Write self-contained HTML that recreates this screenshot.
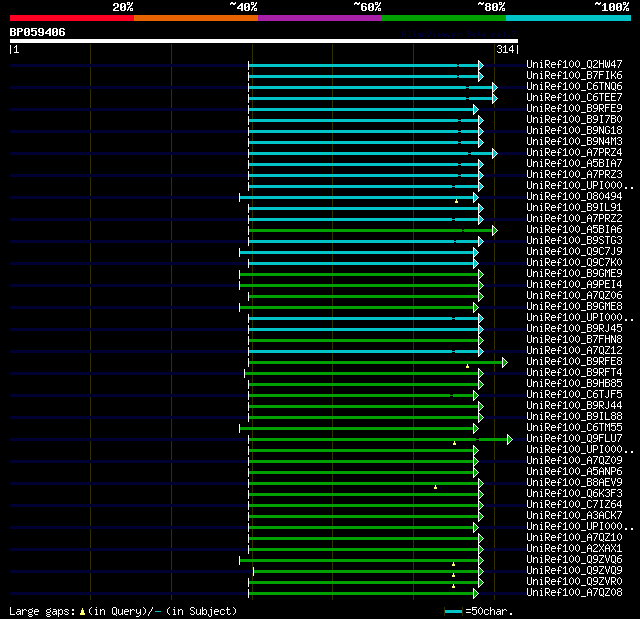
<!DOCTYPE html>
<html lang="en"><head><meta charset="utf-8"><title>AlignView - BP059406</title>
<style>
html,body{margin:0;padding:0;background:#000;}
body{width:640px;height:619px;overflow:hidden;position:relative;font-family:"Liberation Mono",monospace;}
#chart{position:absolute;left:0;top:0;width:640px;height:619px;display:block;}
#labels span{position:absolute;white-space:pre;color:transparent;line-height:13px;height:13px;overflow:hidden;}
#labels .s{font-size:10px;}
#labels .m{font-size:11.6px;font-weight:bold;}
#labels .t{font-size:8.3px;}
</style></head><body>
<svg id="chart" width="640" height="619" viewBox="0 0 640 619" shape-rendering="crispEdges">
<defs><path id="M50" d="M1 3h4v1h-4zM0 4h2v1h-2zM4 4h2v1h-2zM0 5h2v1h-2zM4 5h2v1h-2zM4 6h2v1h-2zM2 7h3v1h-3zM1 8h2v1h-2zM0 9h2v1h-2zM0 10h6v1h-6z"/><path id="M48" d="M1 3h4v1h-4zM0 4h2v1h-2zM4 4h2v1h-2zM0 5h2v1h-2zM4 5h2v1h-2zM0 6h2v1h-2zM3 6h3v1h-3zM0 7h3v1h-3zM4 7h2v1h-2zM0 8h2v1h-2zM4 8h2v1h-2zM0 9h2v1h-2zM4 9h2v1h-2zM1 10h4v1h-4z"/><path id="M37" d="M0 2h3v1h-3zM5 2h1v1h-1zM0 3h1v1h-1zM2 3h1v1h-1zM4 3h2v1h-2zM0 4h3v1h-3zM4 4h1v1h-1zM3 5h2v1h-2zM2 6h2v1h-2zM1 7h2v1h-2zM1 8h1v1h-1zM3 8h3v1h-3zM0 9h2v1h-2zM3 9h1v1h-1zM5 9h1v1h-1zM0 10h1v1h-1zM3 10h3v1h-3z"/><path id="M126" d="M1 2h2v1h-2zM5 2h1v1h-1zM0 3h6v1h-6zM0 4h1v1h-1zM3 4h2v1h-2z"/><path id="M52" d="M4 3h2v1h-2zM3 4h3v1h-3zM2 5h4v1h-4zM1 6h2v1h-2zM4 6h2v1h-2zM0 7h2v1h-2zM4 7h2v1h-2zM0 8h6v1h-6zM4 9h2v1h-2zM4 10h2v1h-2z"/><path id="M54" d="M1 3h4v1h-4zM0 4h2v1h-2zM4 4h2v1h-2zM0 5h2v1h-2zM0 6h5v1h-5zM0 7h2v1h-2zM4 7h2v1h-2zM0 8h2v1h-2zM4 8h2v1h-2zM0 9h2v1h-2zM4 9h2v1h-2zM1 10h4v1h-4z"/><path id="M56" d="M1 3h4v1h-4zM0 4h2v1h-2zM4 4h2v1h-2zM0 5h2v1h-2zM4 5h2v1h-2zM1 6h4v1h-4zM0 7h2v1h-2zM4 7h2v1h-2zM0 8h2v1h-2zM4 8h2v1h-2zM0 9h2v1h-2zM4 9h2v1h-2zM1 10h4v1h-4z"/><path id="M49" d="M2 3h2v1h-2zM1 4h3v1h-3zM0 5h1v1h-1zM2 5h2v1h-2zM2 6h2v1h-2zM2 7h2v1h-2zM2 8h2v1h-2zM2 9h2v1h-2zM0 10h6v1h-6z"/><path id="M66" d="M0 3h5v1h-5zM0 4h2v1h-2zM4 4h2v1h-2zM0 5h2v1h-2zM4 5h2v1h-2zM0 6h5v1h-5zM0 7h2v1h-2zM4 7h2v1h-2zM0 8h2v1h-2zM4 8h2v1h-2zM0 9h2v1h-2zM4 9h2v1h-2zM0 10h5v1h-5z"/><path id="M80" d="M0 3h5v1h-5zM0 4h2v1h-2zM4 4h2v1h-2zM0 5h2v1h-2zM4 5h2v1h-2zM0 6h5v1h-5zM0 7h2v1h-2zM0 8h2v1h-2zM0 9h2v1h-2zM0 10h2v1h-2z"/><path id="M53" d="M0 3h6v1h-6zM0 4h2v1h-2zM0 5h5v1h-5zM0 6h2v1h-2zM4 6h2v1h-2zM4 7h2v1h-2zM4 8h2v1h-2zM0 9h2v1h-2zM4 9h2v1h-2zM1 10h4v1h-4z"/><path id="M57" d="M1 3h4v1h-4zM0 4h2v1h-2zM4 4h2v1h-2zM0 5h2v1h-2zM4 5h2v1h-2zM0 6h2v1h-2zM4 6h2v1h-2zM1 7h5v1h-5zM4 8h2v1h-2zM0 9h2v1h-2zM4 9h2v1h-2zM1 10h4v1h-4z"/><path id="T65" d="M1 1h2v1h-2zM0 2h1v1h-1zM3 2h1v1h-1zM0 3h1v1h-1zM3 3h1v1h-1zM0 4h4v1h-4zM0 5h1v1h-1zM3 5h1v1h-1zM0 6h1v1h-1zM3 6h1v1h-1z"/><path id="T108" d="M1 1h2v1h-2zM2 2h1v1h-1zM2 3h1v1h-1zM2 4h1v1h-1zM2 5h1v1h-1zM1 6h3v1h-3z"/><path id="T105" d="M2 1h1v1h-1zM1 3h2v1h-2zM2 4h1v1h-1zM2 5h1v1h-1zM1 6h3v1h-3z"/><path id="T103" d="M1 3h3v1h-3zM0 4h1v1h-1zM3 4h1v1h-1zM1 5h3v1h-3zM3 6h1v1h-1zM1 7h2v1h-2z"/><path id="T110" d="M0 3h1v1h-1zM2 3h1v1h-1zM0 4h2v1h-2zM3 4h1v1h-1zM0 5h1v1h-1zM3 5h1v1h-1zM0 6h1v1h-1zM3 6h1v1h-1z"/><path id="T86" d="M0 1h1v1h-1zM3 1h1v1h-1zM0 2h1v1h-1zM3 2h1v1h-1zM0 3h1v1h-1zM3 3h1v1h-1zM0 4h1v1h-1zM3 4h1v1h-1zM1 5h2v1h-2zM1 6h2v1h-2z"/><path id="T101" d="M1 3h2v1h-2zM0 4h1v1h-1zM2 4h2v1h-2zM0 5h2v1h-2zM1 6h3v1h-3z"/><path id="T119" d="M0 3h1v1h-1zM4 3h1v1h-1zM0 4h1v1h-1zM2 4h1v1h-1zM4 4h1v1h-1zM0 5h1v1h-1zM2 5h1v1h-1zM4 5h1v1h-1zM1 6h3v1h-3z"/><path id="T46" d="M1 5h2v1h-2zM1 6h2v1h-2z"/><path id="T112" d="M0 3h3v1h-3zM0 4h1v1h-1zM3 4h1v1h-1zM0 5h3v1h-3zM0 6h1v1h-1zM0 7h1v1h-1z"/><path id="T109" d="M0 3h2v1h-2zM3 3h1v1h-1zM0 4h1v1h-1zM2 4h1v1h-1zM4 4h1v1h-1zM0 5h1v1h-1zM2 5h1v1h-1zM4 5h1v1h-1zM0 6h1v1h-1zM4 6h1v1h-1z"/><path id="T66" d="M0 1h3v1h-3zM0 2h1v1h-1zM3 2h1v1h-1zM0 3h3v1h-3zM0 4h1v1h-1zM3 4h1v1h-1zM0 5h1v1h-1zM3 5h1v1h-1zM0 6h3v1h-3z"/><path id="T116" d="M1 1h1v1h-1zM1 2h1v1h-1zM0 3h3v1h-3zM1 4h1v1h-1zM1 5h1v1h-1zM3 5h1v1h-1zM2 6h1v1h-1z"/><path id="T97" d="M1 3h3v1h-3zM0 4h1v1h-1zM3 4h1v1h-1zM0 5h1v1h-1zM2 5h2v1h-2zM1 6h1v1h-1zM3 6h1v1h-1z"/><path id="T114" d="M0 3h1v1h-1zM2 3h1v1h-1zM0 4h2v1h-2zM3 4h1v1h-1zM0 5h1v1h-1zM0 6h1v1h-1z"/><path id="T55" d="M0 1h4v1h-4zM3 2h1v1h-1zM2 3h1v1h-1zM2 4h1v1h-1zM1 5h1v1h-1zM1 6h1v1h-1z"/><path id="S124" d="M2 3h1v1h-1zM2 4h1v1h-1zM2 5h1v1h-1zM2 6h1v1h-1zM2 7h1v1h-1zM2 8h1v1h-1zM2 9h1v1h-1zM2 10h1v1h-1zM2 11h1v1h-1z"/><path id="S49" d="M2 3h1v1h-1zM1 4h2v1h-2zM0 5h1v1h-1zM2 5h1v1h-1zM2 6h1v1h-1zM2 7h1v1h-1zM2 8h1v1h-1zM2 9h1v1h-1zM0 10h5v1h-5z"/><path id="S51" d="M1 3h3v1h-3zM0 4h1v1h-1zM4 4h1v1h-1zM4 5h1v1h-1zM2 6h2v1h-2zM4 7h1v1h-1zM4 8h1v1h-1zM0 9h1v1h-1zM4 9h1v1h-1zM1 10h3v1h-3z"/><path id="S52" d="M3 3h1v1h-1zM2 4h2v1h-2zM1 5h1v1h-1zM3 5h1v1h-1zM0 6h1v1h-1zM3 6h1v1h-1zM0 7h1v1h-1zM3 7h1v1h-1zM0 8h5v1h-5zM3 9h1v1h-1zM3 10h1v1h-1z"/><path id="S85" d="M0 3h1v1h-1zM4 3h1v1h-1zM0 4h1v1h-1zM4 4h1v1h-1zM0 5h1v1h-1zM4 5h1v1h-1zM0 6h1v1h-1zM4 6h1v1h-1zM0 7h1v1h-1zM4 7h1v1h-1zM0 8h1v1h-1zM4 8h1v1h-1zM0 9h1v1h-1zM4 9h1v1h-1zM1 10h3v1h-3z"/><path id="S110" d="M0 5h1v1h-1zM2 5h2v1h-2zM0 6h2v1h-2zM4 6h1v1h-1zM0 7h1v1h-1zM4 7h1v1h-1zM0 8h1v1h-1zM4 8h1v1h-1zM0 9h1v1h-1zM4 9h1v1h-1zM0 10h1v1h-1zM4 10h1v1h-1z"/><path id="S105" d="M2 3h1v1h-1zM1 5h2v1h-2zM2 6h1v1h-1zM2 7h1v1h-1zM2 8h1v1h-1zM2 9h1v1h-1zM1 10h3v1h-3z"/><path id="S82" d="M0 3h4v1h-4zM0 4h1v1h-1zM4 4h1v1h-1zM0 5h1v1h-1zM4 5h1v1h-1zM0 6h1v1h-1zM4 6h1v1h-1zM0 7h4v1h-4zM0 8h1v1h-1zM2 8h1v1h-1zM0 9h1v1h-1zM3 9h1v1h-1zM0 10h1v1h-1zM4 10h1v1h-1z"/><path id="S101" d="M1 5h3v1h-3zM0 6h1v1h-1zM4 6h1v1h-1zM0 7h5v1h-5zM0 8h1v1h-1zM0 9h1v1h-1zM1 10h3v1h-3z"/><path id="S102" d="M2 3h2v1h-2zM1 4h1v1h-1zM4 4h1v1h-1zM1 5h1v1h-1zM1 6h1v1h-1zM0 7h4v1h-4zM1 8h1v1h-1zM1 9h1v1h-1zM1 10h1v1h-1z"/><path id="S48" d="M2 3h1v1h-1zM1 4h1v1h-1zM3 4h1v1h-1zM0 5h1v1h-1zM4 5h1v1h-1zM0 6h1v1h-1zM4 6h1v1h-1zM0 7h1v1h-1zM4 7h1v1h-1zM0 8h1v1h-1zM4 8h1v1h-1zM1 9h1v1h-1zM3 9h1v1h-1zM2 10h1v1h-1z"/><path id="S95" d="M0 11h5v1h-5z"/><path id="S81" d="M1 3h3v1h-3zM0 4h1v1h-1zM4 4h1v1h-1zM0 5h1v1h-1zM4 5h1v1h-1zM0 6h1v1h-1zM4 6h1v1h-1zM0 7h1v1h-1zM4 7h1v1h-1zM0 8h1v1h-1zM4 8h1v1h-1zM0 9h1v1h-1zM2 9h1v1h-1zM4 9h1v1h-1zM1 10h3v1h-3zM4 11h1v1h-1z"/><path id="S50" d="M1 3h3v1h-3zM0 4h1v1h-1zM4 4h1v1h-1zM4 5h1v1h-1zM3 6h1v1h-1zM2 7h1v1h-1zM1 8h1v1h-1zM0 9h1v1h-1zM0 10h5v1h-5z"/><path id="S72" d="M0 3h1v1h-1zM4 3h1v1h-1zM0 4h1v1h-1zM4 4h1v1h-1zM0 5h1v1h-1zM4 5h1v1h-1zM0 6h5v1h-5zM0 7h1v1h-1zM4 7h1v1h-1zM0 8h1v1h-1zM4 8h1v1h-1zM0 9h1v1h-1zM4 9h1v1h-1zM0 10h1v1h-1zM4 10h1v1h-1z"/><path id="S87" d="M0 3h1v1h-1zM4 3h1v1h-1zM0 4h1v1h-1zM4 4h1v1h-1zM0 5h1v1h-1zM2 5h1v1h-1zM4 5h1v1h-1zM0 6h1v1h-1zM2 6h1v1h-1zM4 6h1v1h-1zM0 7h1v1h-1zM2 7h1v1h-1zM4 7h1v1h-1zM0 8h1v1h-1zM2 8h1v1h-1zM4 8h1v1h-1zM0 9h2v1h-2zM3 9h2v1h-2zM1 10h1v1h-1zM3 10h1v1h-1z"/><path id="S55" d="M0 3h5v1h-5zM4 4h1v1h-1zM3 5h1v1h-1zM3 6h1v1h-1zM2 7h1v1h-1zM2 8h1v1h-1zM1 9h1v1h-1zM1 10h1v1h-1z"/><path id="S66" d="M0 3h4v1h-4zM0 4h1v1h-1zM4 4h1v1h-1zM0 5h1v1h-1zM4 5h1v1h-1zM0 6h4v1h-4zM0 7h1v1h-1zM4 7h1v1h-1zM0 8h1v1h-1zM4 8h1v1h-1zM0 9h1v1h-1zM4 9h1v1h-1zM0 10h4v1h-4z"/><path id="S70" d="M0 3h5v1h-5zM0 4h1v1h-1zM0 5h1v1h-1zM0 6h4v1h-4zM0 7h1v1h-1zM0 8h1v1h-1zM0 9h1v1h-1zM0 10h1v1h-1z"/><path id="S73" d="M1 3h3v1h-3zM2 4h1v1h-1zM2 5h1v1h-1zM2 6h1v1h-1zM2 7h1v1h-1zM2 8h1v1h-1zM2 9h1v1h-1zM1 10h3v1h-3z"/><path id="S75" d="M0 3h1v1h-1zM4 3h1v1h-1zM0 4h1v1h-1zM4 4h1v1h-1zM0 5h1v1h-1zM3 5h1v1h-1zM0 6h1v1h-1zM2 6h1v1h-1zM0 7h3v1h-3zM0 8h1v1h-1zM3 8h1v1h-1zM0 9h1v1h-1zM4 9h1v1h-1zM0 10h1v1h-1zM4 10h1v1h-1z"/><path id="S54" d="M2 3h3v1h-3zM1 4h1v1h-1zM0 5h1v1h-1zM0 6h4v1h-4zM0 7h1v1h-1zM4 7h1v1h-1zM0 8h1v1h-1zM4 8h1v1h-1zM0 9h1v1h-1zM4 9h1v1h-1zM1 10h3v1h-3z"/><path id="S67" d="M1 3h3v1h-3zM0 4h1v1h-1zM4 4h1v1h-1zM0 5h1v1h-1zM0 6h1v1h-1zM0 7h1v1h-1zM0 8h1v1h-1zM0 9h1v1h-1zM4 9h1v1h-1zM1 10h3v1h-3z"/><path id="S84" d="M0 3h5v1h-5zM2 4h1v1h-1zM2 5h1v1h-1zM2 6h1v1h-1zM2 7h1v1h-1zM2 8h1v1h-1zM2 9h1v1h-1zM2 10h1v1h-1z"/><path id="S78" d="M0 3h1v1h-1zM4 3h1v1h-1zM0 4h2v1h-2zM4 4h1v1h-1zM0 5h2v1h-2zM4 5h1v1h-1zM0 6h1v1h-1zM2 6h1v1h-1zM4 6h1v1h-1zM0 7h1v1h-1zM2 7h1v1h-1zM4 7h1v1h-1zM0 8h1v1h-1zM3 8h2v1h-2zM0 9h1v1h-1zM3 9h2v1h-2zM0 10h1v1h-1zM4 10h1v1h-1z"/><path id="S69" d="M0 3h5v1h-5zM0 4h1v1h-1zM0 5h1v1h-1zM0 6h4v1h-4zM0 7h1v1h-1zM0 8h1v1h-1zM0 9h1v1h-1zM0 10h5v1h-5z"/><path id="S57" d="M1 3h3v1h-3zM0 4h1v1h-1zM4 4h1v1h-1zM0 5h1v1h-1zM4 5h1v1h-1zM0 6h1v1h-1zM4 6h1v1h-1zM1 7h4v1h-4zM4 8h1v1h-1zM3 9h1v1h-1zM0 10h3v1h-3z"/><path id="S71" d="M1 3h3v1h-3zM0 4h1v1h-1zM4 4h1v1h-1zM0 5h1v1h-1zM0 6h1v1h-1zM0 7h1v1h-1zM3 7h2v1h-2zM0 8h1v1h-1zM4 8h1v1h-1zM0 9h1v1h-1zM4 9h1v1h-1zM1 10h3v1h-3z"/><path id="S56" d="M1 3h3v1h-3zM0 4h1v1h-1zM4 4h1v1h-1zM0 5h1v1h-1zM4 5h1v1h-1zM1 6h3v1h-3zM0 7h1v1h-1zM4 7h1v1h-1zM0 8h1v1h-1zM4 8h1v1h-1zM0 9h1v1h-1zM4 9h1v1h-1zM1 10h3v1h-3z"/><path id="S77" d="M0 3h1v1h-1zM4 3h1v1h-1zM0 4h2v1h-2zM3 4h2v1h-2zM0 5h1v1h-1zM2 5h1v1h-1zM4 5h1v1h-1zM0 6h1v1h-1zM2 6h1v1h-1zM4 6h1v1h-1zM0 7h1v1h-1zM4 7h1v1h-1zM0 8h1v1h-1zM4 8h1v1h-1zM0 9h1v1h-1zM4 9h1v1h-1zM0 10h1v1h-1zM4 10h1v1h-1z"/><path id="S65" d="M2 3h1v1h-1zM1 4h1v1h-1zM3 4h1v1h-1zM0 5h1v1h-1zM4 5h1v1h-1zM0 6h1v1h-1zM4 6h1v1h-1zM0 7h5v1h-5zM0 8h1v1h-1zM4 8h1v1h-1zM0 9h1v1h-1zM4 9h1v1h-1zM0 10h1v1h-1zM4 10h1v1h-1z"/><path id="S80" d="M0 3h4v1h-4zM0 4h1v1h-1zM4 4h1v1h-1zM0 5h1v1h-1zM4 5h1v1h-1zM0 6h1v1h-1zM4 6h1v1h-1zM0 7h4v1h-4zM0 8h1v1h-1zM0 9h1v1h-1zM0 10h1v1h-1z"/><path id="S90" d="M0 3h5v1h-5zM4 4h1v1h-1zM3 5h1v1h-1zM2 6h1v1h-1zM2 7h1v1h-1zM1 8h1v1h-1zM0 9h1v1h-1zM0 10h5v1h-5z"/><path id="S53" d="M0 3h5v1h-5zM0 4h1v1h-1zM0 5h4v1h-4zM0 6h1v1h-1zM4 6h1v1h-1zM4 7h1v1h-1zM4 8h1v1h-1zM0 9h1v1h-1zM4 9h1v1h-1zM1 10h3v1h-3z"/><path id="S46" d="M2 9h2v1h-2zM2 10h2v1h-2z"/><path id="S79" d="M1 3h3v1h-3zM0 4h1v1h-1zM4 4h1v1h-1zM0 5h1v1h-1zM4 5h1v1h-1zM0 6h1v1h-1zM4 6h1v1h-1zM0 7h1v1h-1zM4 7h1v1h-1zM0 8h1v1h-1zM4 8h1v1h-1zM0 9h1v1h-1zM4 9h1v1h-1zM1 10h3v1h-3z"/><path id="S76" d="M0 3h1v1h-1zM0 4h1v1h-1zM0 5h1v1h-1zM0 6h1v1h-1zM0 7h1v1h-1zM0 8h1v1h-1zM0 9h1v1h-1zM0 10h5v1h-5z"/><path id="S83" d="M1 3h3v1h-3zM0 4h1v1h-1zM4 4h1v1h-1zM0 5h1v1h-1zM1 6h2v1h-2zM3 7h1v1h-1zM4 8h1v1h-1zM0 9h1v1h-1zM4 9h1v1h-1zM1 10h3v1h-3z"/><path id="S74" d="M3 3h1v1h-1zM3 4h1v1h-1zM3 5h1v1h-1zM3 6h1v1h-1zM3 7h1v1h-1zM3 8h1v1h-1zM0 9h1v1h-1zM3 9h1v1h-1zM1 10h2v1h-2z"/><path id="S86" d="M0 3h1v1h-1zM4 3h1v1h-1zM0 4h1v1h-1zM4 4h1v1h-1zM0 5h1v1h-1zM4 5h1v1h-1zM1 6h1v1h-1zM3 6h1v1h-1zM1 7h1v1h-1zM3 7h1v1h-1zM1 8h1v1h-1zM3 8h1v1h-1zM2 9h1v1h-1zM2 10h1v1h-1z"/><path id="S88" d="M0 3h1v1h-1zM4 3h1v1h-1zM0 4h1v1h-1zM4 4h1v1h-1zM1 5h1v1h-1zM3 5h1v1h-1zM2 6h1v1h-1zM2 7h1v1h-1zM1 8h1v1h-1zM3 8h1v1h-1zM0 9h1v1h-1zM4 9h1v1h-1zM0 10h1v1h-1zM4 10h1v1h-1z"/><path id="S97" d="M1 5h3v1h-3zM4 6h1v1h-1zM1 7h4v1h-4zM0 8h1v1h-1zM4 8h1v1h-1zM0 9h1v1h-1zM3 9h2v1h-2zM1 10h2v1h-2zM4 10h1v1h-1z"/><path id="S114" d="M0 5h1v1h-1zM2 5h2v1h-2zM0 6h2v1h-2zM4 6h1v1h-1zM0 7h1v1h-1zM0 8h1v1h-1zM0 9h1v1h-1zM0 10h1v1h-1z"/><path id="S103" d="M4 4h1v1h-1zM1 5h3v1h-3zM0 6h1v1h-1zM4 6h1v1h-1zM0 7h1v1h-1zM4 7h1v1h-1zM1 8h3v1h-3zM0 9h1v1h-1zM1 10h3v1h-3zM0 11h1v1h-1zM4 11h1v1h-1zM1 12h3v1h-3z"/><path id="S112" d="M0 5h1v1h-1zM2 5h2v1h-2zM0 6h2v1h-2zM4 6h1v1h-1zM0 7h1v1h-1zM4 7h1v1h-1zM0 8h1v1h-1zM4 8h1v1h-1zM0 9h2v1h-2zM4 9h1v1h-1zM0 10h1v1h-1zM2 10h2v1h-2zM0 11h1v1h-1zM0 12h1v1h-1z"/><path id="S115" d="M1 5h3v1h-3zM0 6h1v1h-1zM4 6h1v1h-1zM1 7h2v1h-2zM3 8h1v1h-1zM0 9h1v1h-1zM4 9h1v1h-1zM1 10h3v1h-3z"/><path id="S58" d="M2 5h2v1h-2zM2 6h2v1h-2zM2 9h2v1h-2zM2 10h2v1h-2z"/><path id="S40" d="M3 3h1v1h-1zM2 4h1v1h-1zM1 5h1v1h-1zM1 6h1v1h-1zM1 7h1v1h-1zM1 8h1v1h-1zM2 9h1v1h-1zM3 10h1v1h-1z"/><path id="S117" d="M0 5h1v1h-1zM4 5h1v1h-1zM0 6h1v1h-1zM4 6h1v1h-1zM0 7h1v1h-1zM4 7h1v1h-1zM0 8h1v1h-1zM4 8h1v1h-1zM0 9h1v1h-1zM3 9h2v1h-2zM1 10h2v1h-2zM4 10h1v1h-1z"/><path id="S121" d="M0 5h1v1h-1zM4 5h1v1h-1zM0 6h1v1h-1zM4 6h1v1h-1zM0 7h1v1h-1zM4 7h1v1h-1zM0 8h1v1h-1zM3 8h2v1h-2zM1 9h2v1h-2zM4 9h1v1h-1zM4 10h1v1h-1zM3 11h1v1h-1zM0 12h3v1h-3z"/><path id="S41" d="M1 3h1v1h-1zM2 4h1v1h-1zM3 5h1v1h-1zM3 6h1v1h-1zM3 7h1v1h-1zM3 8h1v1h-1zM2 9h1v1h-1zM1 10h1v1h-1z"/><path id="S47" d="M4 3h1v1h-1zM4 4h1v1h-1zM3 5h1v1h-1zM3 6h1v1h-1zM2 7h1v1h-1zM1 8h1v1h-1zM1 9h1v1h-1zM0 10h1v1h-1zM0 11h1v1h-1z"/><path id="S98" d="M0 3h1v1h-1zM0 4h1v1h-1zM0 5h1v1h-1zM2 5h2v1h-2zM0 6h2v1h-2zM4 6h1v1h-1zM0 7h1v1h-1zM4 7h1v1h-1zM0 8h1v1h-1zM4 8h1v1h-1zM0 9h2v1h-2zM4 9h1v1h-1zM0 10h1v1h-1zM2 10h2v1h-2z"/><path id="S106" d="M3 3h1v1h-1zM2 5h2v1h-2zM3 6h1v1h-1zM3 7h1v1h-1zM3 8h1v1h-1zM3 9h1v1h-1zM0 10h1v1h-1zM3 10h1v1h-1zM0 11h1v1h-1zM3 11h1v1h-1zM1 12h2v1h-2z"/><path id="S99" d="M1 5h3v1h-3zM0 6h1v1h-1zM4 6h1v1h-1zM0 7h1v1h-1zM0 8h1v1h-1zM0 9h1v1h-1zM4 9h1v1h-1zM1 10h3v1h-3z"/><path id="S116" d="M1 3h1v1h-1zM1 4h1v1h-1zM0 5h4v1h-4zM1 6h1v1h-1zM1 7h1v1h-1zM1 8h1v1h-1zM1 9h1v1h-1zM4 9h1v1h-1zM2 10h2v1h-2z"/><path id="S61" d="M0 5h5v1h-5zM0 8h5v1h-5z"/><path id="S104" d="M0 3h1v1h-1zM0 4h1v1h-1zM0 5h1v1h-1zM2 5h2v1h-2zM0 6h2v1h-2zM4 6h1v1h-1zM0 7h1v1h-1zM4 7h1v1h-1zM0 8h1v1h-1zM4 8h1v1h-1zM0 9h1v1h-1zM4 9h1v1h-1zM0 10h1v1h-1zM4 10h1v1h-1z"/></defs>
<rect width="640" height="619" fill="#000"/>
<rect x="10" y="15" width="124" height="6" fill="#ff0024"/>
<rect x="134" y="15" width="124" height="6" fill="#e86400"/>
<rect x="258" y="15" width="124" height="6" fill="#a820a8"/>
<rect x="382" y="15" width="124" height="6" fill="#00a000"/>
<rect x="506" y="15" width="125" height="6" fill="#00c4c8"/>
<g fill="#fff" transform="translate(0,0)"><use href="#M50" x="113"/><use href="#M48" x="120"/><use href="#M37" x="127"/></g>
<g fill="#fff" transform="translate(0,0)"><use href="#M126" x="230"/><use href="#M52" x="237"/><use href="#M48" x="244"/><use href="#M37" x="251"/></g>
<g fill="#fff" transform="translate(0,0)"><use href="#M126" x="354"/><use href="#M54" x="361"/><use href="#M48" x="368"/><use href="#M37" x="375"/></g>
<g fill="#fff" transform="translate(0,0)"><use href="#M126" x="478"/><use href="#M56" x="485"/><use href="#M48" x="492"/><use href="#M37" x="499"/></g>
<g fill="#fff" transform="translate(0,0)"><use href="#M126" x="595"/><use href="#M49" x="602"/><use href="#M48" x="609"/><use href="#M48" x="616"/><use href="#M37" x="623"/></g>
<g fill="#fff" transform="translate(0,25)"><use href="#M66" x="10"/><use href="#M80" x="17"/><use href="#M48" x="24"/><use href="#M53" x="31"/><use href="#M57" x="38"/><use href="#M52" x="45"/><use href="#M48" x="52"/><use href="#M54" x="59"/></g>
<g fill="#000036" transform="translate(0,30)"><use href="#T65" x="402"/><use href="#T108" x="407"/><use href="#T105" x="412"/><use href="#T103" x="417"/><use href="#T110" x="422"/><use href="#T86" x="427"/><use href="#T105" x="432"/><use href="#T101" x="437"/><use href="#T119" x="442"/><use href="#T46" x="447"/><use href="#T112" x="452"/><use href="#T109" x="457"/><use href="#T66" x="467"/><use href="#T101" x="472"/><use href="#T116" x="477"/><use href="#T97" x="482"/><use href="#T114" x="492"/><use href="#T101" x="497"/><use href="#T108" x="502"/><use href="#T46" x="507"/><use href="#T55" x="512"/></g>
<rect x="90" y="44" width="1" height="556" fill="#323000"/>
<rect x="171" y="44" width="1" height="556" fill="#323000"/>
<rect x="252" y="44" width="1" height="556" fill="#323000"/>
<rect x="332" y="44" width="1" height="556" fill="#323000"/>
<rect x="413" y="44" width="1" height="556" fill="#323000"/>
<rect x="494" y="44" width="1" height="556" fill="#323000"/>
<rect x="10" y="39" width="508" height="4" fill="#fff"/>
<g fill="#fff" transform="translate(0,42)"><use href="#S124" x="8"/><use href="#S49" x="14"/></g>
<g fill="#fff" transform="translate(0,42)"><use href="#S51" x="497"/><use href="#S49" x="503"/><use href="#S52" x="509"/><use href="#S124" x="515"/></g>
<rect x="10" y="64" width="517" height="3" fill="#000032"/>
<rect x="249" y="64" width="229" height="3" fill="#00c4c8"/>
<rect x="457" y="64" width="2" height="1" fill="#000"/>
<rect x="457" y="66" width="2" height="1" fill="#000"/>
<rect x="248" y="61" width="1" height="9" fill="#fff"/>
<rect x="479" y="62" width="1" height="7" fill="#00c4c8"/>
<rect x="480" y="63" width="1" height="5" fill="#00c4c8"/>
<rect x="481" y="64" width="1" height="3" fill="#00c4c8"/>
<rect x="482" y="65" width="1" height="1" fill="#00c4c8"/>
<rect x="478" y="60" width="1" height="11" fill="#fff"/>
<rect x="479" y="61" width="1" height="1" fill="#fff"/>
<rect x="479" y="69" width="1" height="1" fill="#fff"/>
<rect x="480" y="62" width="1" height="1" fill="#fff"/>
<rect x="480" y="68" width="1" height="1" fill="#fff"/>
<rect x="481" y="63" width="1" height="1" fill="#fff"/>
<rect x="481" y="67" width="1" height="1" fill="#fff"/>
<rect x="482" y="64" width="1" height="1" fill="#fff"/>
<rect x="482" y="66" width="1" height="1" fill="#fff"/>
<rect x="483" y="65" width="1" height="1" fill="#fff"/>
<g fill="#fff" transform="translate(0,57)"><use href="#S85" x="527"/><use href="#S110" x="533"/><use href="#S105" x="539"/><use href="#S82" x="545"/><use href="#S101" x="551"/><use href="#S102" x="557"/><use href="#S49" x="563"/><use href="#S48" x="569"/><use href="#S48" x="575"/><use href="#S95" x="581"/><use href="#S81" x="587"/><use href="#S50" x="593"/><use href="#S72" x="599"/><use href="#S87" x="605"/><use href="#S52" x="611"/><use href="#S55" x="617"/></g>
<rect x="249" y="75" width="229" height="3" fill="#00c4c8"/>
<rect x="457" y="75" width="2" height="1" fill="#000"/>
<rect x="457" y="77" width="2" height="1" fill="#000"/>
<rect x="248" y="72" width="1" height="9" fill="#fff"/>
<rect x="479" y="73" width="1" height="7" fill="#00c4c8"/>
<rect x="480" y="74" width="1" height="5" fill="#00c4c8"/>
<rect x="481" y="75" width="1" height="3" fill="#00c4c8"/>
<rect x="482" y="76" width="1" height="1" fill="#00c4c8"/>
<rect x="478" y="71" width="1" height="11" fill="#fff"/>
<rect x="479" y="72" width="1" height="1" fill="#fff"/>
<rect x="479" y="80" width="1" height="1" fill="#fff"/>
<rect x="480" y="73" width="1" height="1" fill="#fff"/>
<rect x="480" y="79" width="1" height="1" fill="#fff"/>
<rect x="481" y="74" width="1" height="1" fill="#fff"/>
<rect x="481" y="78" width="1" height="1" fill="#fff"/>
<rect x="482" y="75" width="1" height="1" fill="#fff"/>
<rect x="482" y="77" width="1" height="1" fill="#fff"/>
<rect x="483" y="76" width="1" height="1" fill="#fff"/>
<g fill="#fff" transform="translate(0,68)"><use href="#S85" x="527"/><use href="#S110" x="533"/><use href="#S105" x="539"/><use href="#S82" x="545"/><use href="#S101" x="551"/><use href="#S102" x="557"/><use href="#S49" x="563"/><use href="#S48" x="569"/><use href="#S48" x="575"/><use href="#S95" x="581"/><use href="#S66" x="587"/><use href="#S55" x="593"/><use href="#S70" x="599"/><use href="#S73" x="605"/><use href="#S75" x="611"/><use href="#S54" x="617"/></g>
<rect x="10" y="86" width="517" height="3" fill="#000032"/>
<rect x="249" y="86" width="243" height="3" fill="#00c4c8"/>
<rect x="466" y="86" width="3" height="1" fill="#000"/>
<rect x="466" y="88" width="3" height="1" fill="#000"/>
<rect x="248" y="83" width="1" height="9" fill="#fff"/>
<rect x="493" y="84" width="1" height="7" fill="#00c4c8"/>
<rect x="494" y="85" width="1" height="5" fill="#00c4c8"/>
<rect x="495" y="86" width="1" height="3" fill="#00c4c8"/>
<rect x="496" y="87" width="1" height="1" fill="#00c4c8"/>
<rect x="492" y="82" width="1" height="11" fill="#fff"/>
<rect x="493" y="83" width="1" height="1" fill="#fff"/>
<rect x="493" y="91" width="1" height="1" fill="#fff"/>
<rect x="494" y="84" width="1" height="1" fill="#fff"/>
<rect x="494" y="90" width="1" height="1" fill="#fff"/>
<rect x="495" y="85" width="1" height="1" fill="#fff"/>
<rect x="495" y="89" width="1" height="1" fill="#fff"/>
<rect x="496" y="86" width="1" height="1" fill="#fff"/>
<rect x="496" y="88" width="1" height="1" fill="#fff"/>
<rect x="497" y="87" width="1" height="1" fill="#fff"/>
<g fill="#fff" transform="translate(0,79)"><use href="#S85" x="527"/><use href="#S110" x="533"/><use href="#S105" x="539"/><use href="#S82" x="545"/><use href="#S101" x="551"/><use href="#S102" x="557"/><use href="#S49" x="563"/><use href="#S48" x="569"/><use href="#S48" x="575"/><use href="#S95" x="581"/><use href="#S67" x="587"/><use href="#S54" x="593"/><use href="#S84" x="599"/><use href="#S78" x="605"/><use href="#S81" x="611"/><use href="#S54" x="617"/></g>
<rect x="249" y="97" width="243" height="3" fill="#00c4c8"/>
<rect x="466" y="97" width="3" height="1" fill="#000"/>
<rect x="466" y="99" width="3" height="1" fill="#000"/>
<rect x="248" y="94" width="1" height="9" fill="#fff"/>
<rect x="493" y="95" width="1" height="7" fill="#00c4c8"/>
<rect x="494" y="96" width="1" height="5" fill="#00c4c8"/>
<rect x="495" y="97" width="1" height="3" fill="#00c4c8"/>
<rect x="496" y="98" width="1" height="1" fill="#00c4c8"/>
<rect x="492" y="93" width="1" height="11" fill="#fff"/>
<rect x="493" y="94" width="1" height="1" fill="#fff"/>
<rect x="493" y="102" width="1" height="1" fill="#fff"/>
<rect x="494" y="95" width="1" height="1" fill="#fff"/>
<rect x="494" y="101" width="1" height="1" fill="#fff"/>
<rect x="495" y="96" width="1" height="1" fill="#fff"/>
<rect x="495" y="100" width="1" height="1" fill="#fff"/>
<rect x="496" y="97" width="1" height="1" fill="#fff"/>
<rect x="496" y="99" width="1" height="1" fill="#fff"/>
<rect x="497" y="98" width="1" height="1" fill="#fff"/>
<g fill="#fff" transform="translate(0,90)"><use href="#S85" x="527"/><use href="#S110" x="533"/><use href="#S105" x="539"/><use href="#S82" x="545"/><use href="#S101" x="551"/><use href="#S102" x="557"/><use href="#S49" x="563"/><use href="#S48" x="569"/><use href="#S48" x="575"/><use href="#S95" x="581"/><use href="#S67" x="587"/><use href="#S54" x="593"/><use href="#S84" x="599"/><use href="#S69" x="605"/><use href="#S69" x="611"/><use href="#S55" x="617"/></g>
<rect x="10" y="108" width="517" height="3" fill="#000032"/>
<rect x="249" y="108" width="224" height="3" fill="#00c4c8"/>
<rect x="248" y="105" width="1" height="9" fill="#fff"/>
<rect x="474" y="106" width="1" height="7" fill="#00c4c8"/>
<rect x="475" y="107" width="1" height="5" fill="#00c4c8"/>
<rect x="476" y="108" width="1" height="3" fill="#00c4c8"/>
<rect x="477" y="109" width="1" height="1" fill="#00c4c8"/>
<rect x="473" y="104" width="1" height="11" fill="#fff"/>
<rect x="474" y="105" width="1" height="1" fill="#fff"/>
<rect x="474" y="113" width="1" height="1" fill="#fff"/>
<rect x="475" y="106" width="1" height="1" fill="#fff"/>
<rect x="475" y="112" width="1" height="1" fill="#fff"/>
<rect x="476" y="107" width="1" height="1" fill="#fff"/>
<rect x="476" y="111" width="1" height="1" fill="#fff"/>
<rect x="477" y="108" width="1" height="1" fill="#fff"/>
<rect x="477" y="110" width="1" height="1" fill="#fff"/>
<rect x="478" y="109" width="1" height="1" fill="#fff"/>
<g fill="#fff" transform="translate(0,101)"><use href="#S85" x="527"/><use href="#S110" x="533"/><use href="#S105" x="539"/><use href="#S82" x="545"/><use href="#S101" x="551"/><use href="#S102" x="557"/><use href="#S49" x="563"/><use href="#S48" x="569"/><use href="#S48" x="575"/><use href="#S95" x="581"/><use href="#S66" x="587"/><use href="#S57" x="593"/><use href="#S82" x="599"/><use href="#S70" x="605"/><use href="#S69" x="611"/><use href="#S57" x="617"/></g>
<rect x="249" y="119" width="229" height="3" fill="#00c4c8"/>
<rect x="458" y="119" width="3" height="1" fill="#000"/>
<rect x="458" y="121" width="3" height="1" fill="#000"/>
<rect x="248" y="116" width="1" height="9" fill="#fff"/>
<rect x="479" y="117" width="1" height="7" fill="#00c4c8"/>
<rect x="480" y="118" width="1" height="5" fill="#00c4c8"/>
<rect x="481" y="119" width="1" height="3" fill="#00c4c8"/>
<rect x="482" y="120" width="1" height="1" fill="#00c4c8"/>
<rect x="478" y="115" width="1" height="11" fill="#fff"/>
<rect x="479" y="116" width="1" height="1" fill="#fff"/>
<rect x="479" y="124" width="1" height="1" fill="#fff"/>
<rect x="480" y="117" width="1" height="1" fill="#fff"/>
<rect x="480" y="123" width="1" height="1" fill="#fff"/>
<rect x="481" y="118" width="1" height="1" fill="#fff"/>
<rect x="481" y="122" width="1" height="1" fill="#fff"/>
<rect x="482" y="119" width="1" height="1" fill="#fff"/>
<rect x="482" y="121" width="1" height="1" fill="#fff"/>
<rect x="483" y="120" width="1" height="1" fill="#fff"/>
<g fill="#fff" transform="translate(0,112)"><use href="#S85" x="527"/><use href="#S110" x="533"/><use href="#S105" x="539"/><use href="#S82" x="545"/><use href="#S101" x="551"/><use href="#S102" x="557"/><use href="#S49" x="563"/><use href="#S48" x="569"/><use href="#S48" x="575"/><use href="#S95" x="581"/><use href="#S66" x="587"/><use href="#S57" x="593"/><use href="#S73" x="599"/><use href="#S55" x="605"/><use href="#S66" x="611"/><use href="#S48" x="617"/></g>
<rect x="10" y="130" width="517" height="3" fill="#000032"/>
<rect x="249" y="130" width="229" height="3" fill="#00c4c8"/>
<rect x="458" y="130" width="3" height="1" fill="#000"/>
<rect x="458" y="132" width="3" height="1" fill="#000"/>
<rect x="248" y="127" width="1" height="9" fill="#fff"/>
<rect x="479" y="128" width="1" height="7" fill="#00c4c8"/>
<rect x="480" y="129" width="1" height="5" fill="#00c4c8"/>
<rect x="481" y="130" width="1" height="3" fill="#00c4c8"/>
<rect x="482" y="131" width="1" height="1" fill="#00c4c8"/>
<rect x="478" y="126" width="1" height="11" fill="#fff"/>
<rect x="479" y="127" width="1" height="1" fill="#fff"/>
<rect x="479" y="135" width="1" height="1" fill="#fff"/>
<rect x="480" y="128" width="1" height="1" fill="#fff"/>
<rect x="480" y="134" width="1" height="1" fill="#fff"/>
<rect x="481" y="129" width="1" height="1" fill="#fff"/>
<rect x="481" y="133" width="1" height="1" fill="#fff"/>
<rect x="482" y="130" width="1" height="1" fill="#fff"/>
<rect x="482" y="132" width="1" height="1" fill="#fff"/>
<rect x="483" y="131" width="1" height="1" fill="#fff"/>
<g fill="#fff" transform="translate(0,123)"><use href="#S85" x="527"/><use href="#S110" x="533"/><use href="#S105" x="539"/><use href="#S82" x="545"/><use href="#S101" x="551"/><use href="#S102" x="557"/><use href="#S49" x="563"/><use href="#S48" x="569"/><use href="#S48" x="575"/><use href="#S95" x="581"/><use href="#S66" x="587"/><use href="#S57" x="593"/><use href="#S78" x="599"/><use href="#S71" x="605"/><use href="#S49" x="611"/><use href="#S56" x="617"/></g>
<rect x="249" y="141" width="229" height="3" fill="#00c4c8"/>
<rect x="458" y="141" width="3" height="1" fill="#000"/>
<rect x="458" y="143" width="3" height="1" fill="#000"/>
<rect x="248" y="138" width="1" height="9" fill="#fff"/>
<rect x="479" y="139" width="1" height="7" fill="#00c4c8"/>
<rect x="480" y="140" width="1" height="5" fill="#00c4c8"/>
<rect x="481" y="141" width="1" height="3" fill="#00c4c8"/>
<rect x="482" y="142" width="1" height="1" fill="#00c4c8"/>
<rect x="478" y="137" width="1" height="11" fill="#fff"/>
<rect x="479" y="138" width="1" height="1" fill="#fff"/>
<rect x="479" y="146" width="1" height="1" fill="#fff"/>
<rect x="480" y="139" width="1" height="1" fill="#fff"/>
<rect x="480" y="145" width="1" height="1" fill="#fff"/>
<rect x="481" y="140" width="1" height="1" fill="#fff"/>
<rect x="481" y="144" width="1" height="1" fill="#fff"/>
<rect x="482" y="141" width="1" height="1" fill="#fff"/>
<rect x="482" y="143" width="1" height="1" fill="#fff"/>
<rect x="483" y="142" width="1" height="1" fill="#fff"/>
<g fill="#fff" transform="translate(0,134)"><use href="#S85" x="527"/><use href="#S110" x="533"/><use href="#S105" x="539"/><use href="#S82" x="545"/><use href="#S101" x="551"/><use href="#S102" x="557"/><use href="#S49" x="563"/><use href="#S48" x="569"/><use href="#S48" x="575"/><use href="#S95" x="581"/><use href="#S66" x="587"/><use href="#S57" x="593"/><use href="#S78" x="599"/><use href="#S52" x="605"/><use href="#S77" x="611"/><use href="#S51" x="617"/></g>
<rect x="10" y="152" width="517" height="3" fill="#000032"/>
<rect x="249" y="152" width="243" height="3" fill="#00c4c8"/>
<rect x="468" y="152" width="3" height="1" fill="#000"/>
<rect x="468" y="154" width="3" height="1" fill="#000"/>
<rect x="248" y="149" width="1" height="9" fill="#fff"/>
<rect x="493" y="150" width="1" height="7" fill="#00c4c8"/>
<rect x="494" y="151" width="1" height="5" fill="#00c4c8"/>
<rect x="495" y="152" width="1" height="3" fill="#00c4c8"/>
<rect x="496" y="153" width="1" height="1" fill="#00c4c8"/>
<rect x="492" y="148" width="1" height="11" fill="#fff"/>
<rect x="493" y="149" width="1" height="1" fill="#fff"/>
<rect x="493" y="157" width="1" height="1" fill="#fff"/>
<rect x="494" y="150" width="1" height="1" fill="#fff"/>
<rect x="494" y="156" width="1" height="1" fill="#fff"/>
<rect x="495" y="151" width="1" height="1" fill="#fff"/>
<rect x="495" y="155" width="1" height="1" fill="#fff"/>
<rect x="496" y="152" width="1" height="1" fill="#fff"/>
<rect x="496" y="154" width="1" height="1" fill="#fff"/>
<rect x="497" y="153" width="1" height="1" fill="#fff"/>
<g fill="#fff" transform="translate(0,145)"><use href="#S85" x="527"/><use href="#S110" x="533"/><use href="#S105" x="539"/><use href="#S82" x="545"/><use href="#S101" x="551"/><use href="#S102" x="557"/><use href="#S49" x="563"/><use href="#S48" x="569"/><use href="#S48" x="575"/><use href="#S95" x="581"/><use href="#S65" x="587"/><use href="#S55" x="593"/><use href="#S80" x="599"/><use href="#S82" x="605"/><use href="#S90" x="611"/><use href="#S52" x="617"/></g>
<rect x="249" y="163" width="229" height="3" fill="#00c4c8"/>
<rect x="458" y="163" width="3" height="1" fill="#000"/>
<rect x="458" y="165" width="3" height="1" fill="#000"/>
<rect x="248" y="160" width="1" height="9" fill="#fff"/>
<rect x="479" y="161" width="1" height="7" fill="#00c4c8"/>
<rect x="480" y="162" width="1" height="5" fill="#00c4c8"/>
<rect x="481" y="163" width="1" height="3" fill="#00c4c8"/>
<rect x="482" y="164" width="1" height="1" fill="#00c4c8"/>
<rect x="478" y="159" width="1" height="11" fill="#fff"/>
<rect x="479" y="160" width="1" height="1" fill="#fff"/>
<rect x="479" y="168" width="1" height="1" fill="#fff"/>
<rect x="480" y="161" width="1" height="1" fill="#fff"/>
<rect x="480" y="167" width="1" height="1" fill="#fff"/>
<rect x="481" y="162" width="1" height="1" fill="#fff"/>
<rect x="481" y="166" width="1" height="1" fill="#fff"/>
<rect x="482" y="163" width="1" height="1" fill="#fff"/>
<rect x="482" y="165" width="1" height="1" fill="#fff"/>
<rect x="483" y="164" width="1" height="1" fill="#fff"/>
<g fill="#fff" transform="translate(0,156)"><use href="#S85" x="527"/><use href="#S110" x="533"/><use href="#S105" x="539"/><use href="#S82" x="545"/><use href="#S101" x="551"/><use href="#S102" x="557"/><use href="#S49" x="563"/><use href="#S48" x="569"/><use href="#S48" x="575"/><use href="#S95" x="581"/><use href="#S65" x="587"/><use href="#S53" x="593"/><use href="#S66" x="599"/><use href="#S73" x="605"/><use href="#S65" x="611"/><use href="#S55" x="617"/></g>
<rect x="10" y="174" width="517" height="3" fill="#000032"/>
<rect x="249" y="174" width="229" height="3" fill="#00c4c8"/>
<rect x="458" y="174" width="3" height="1" fill="#000"/>
<rect x="458" y="176" width="3" height="1" fill="#000"/>
<rect x="248" y="171" width="1" height="9" fill="#fff"/>
<rect x="479" y="172" width="1" height="7" fill="#00c4c8"/>
<rect x="480" y="173" width="1" height="5" fill="#00c4c8"/>
<rect x="481" y="174" width="1" height="3" fill="#00c4c8"/>
<rect x="482" y="175" width="1" height="1" fill="#00c4c8"/>
<rect x="478" y="170" width="1" height="11" fill="#fff"/>
<rect x="479" y="171" width="1" height="1" fill="#fff"/>
<rect x="479" y="179" width="1" height="1" fill="#fff"/>
<rect x="480" y="172" width="1" height="1" fill="#fff"/>
<rect x="480" y="178" width="1" height="1" fill="#fff"/>
<rect x="481" y="173" width="1" height="1" fill="#fff"/>
<rect x="481" y="177" width="1" height="1" fill="#fff"/>
<rect x="482" y="174" width="1" height="1" fill="#fff"/>
<rect x="482" y="176" width="1" height="1" fill="#fff"/>
<rect x="483" y="175" width="1" height="1" fill="#fff"/>
<g fill="#fff" transform="translate(0,167)"><use href="#S85" x="527"/><use href="#S110" x="533"/><use href="#S105" x="539"/><use href="#S82" x="545"/><use href="#S101" x="551"/><use href="#S102" x="557"/><use href="#S49" x="563"/><use href="#S48" x="569"/><use href="#S48" x="575"/><use href="#S95" x="581"/><use href="#S65" x="587"/><use href="#S55" x="593"/><use href="#S80" x="599"/><use href="#S82" x="605"/><use href="#S90" x="611"/><use href="#S51" x="617"/></g>
<rect x="249" y="185" width="229" height="3" fill="#00c4c8"/>
<rect x="452" y="185" width="3" height="1" fill="#000"/>
<rect x="452" y="187" width="3" height="1" fill="#000"/>
<rect x="248" y="182" width="1" height="9" fill="#fff"/>
<rect x="479" y="183" width="1" height="7" fill="#00c4c8"/>
<rect x="480" y="184" width="1" height="5" fill="#00c4c8"/>
<rect x="481" y="185" width="1" height="3" fill="#00c4c8"/>
<rect x="482" y="186" width="1" height="1" fill="#00c4c8"/>
<rect x="478" y="181" width="1" height="11" fill="#fff"/>
<rect x="479" y="182" width="1" height="1" fill="#fff"/>
<rect x="479" y="190" width="1" height="1" fill="#fff"/>
<rect x="480" y="183" width="1" height="1" fill="#fff"/>
<rect x="480" y="189" width="1" height="1" fill="#fff"/>
<rect x="481" y="184" width="1" height="1" fill="#fff"/>
<rect x="481" y="188" width="1" height="1" fill="#fff"/>
<rect x="482" y="185" width="1" height="1" fill="#fff"/>
<rect x="482" y="187" width="1" height="1" fill="#fff"/>
<rect x="483" y="186" width="1" height="1" fill="#fff"/>
<g fill="#fff" transform="translate(0,178)"><use href="#S85" x="527"/><use href="#S110" x="533"/><use href="#S105" x="539"/><use href="#S82" x="545"/><use href="#S101" x="551"/><use href="#S102" x="557"/><use href="#S49" x="563"/><use href="#S48" x="569"/><use href="#S48" x="575"/><use href="#S95" x="581"/><use href="#S85" x="587"/><use href="#S80" x="593"/><use href="#S73" x="599"/><use href="#S48" x="605"/><use href="#S48" x="611"/><use href="#S48" x="617"/><use href="#S46" x="623"/><use href="#S46" x="629"/></g>
<rect x="10" y="196" width="517" height="3" fill="#000032"/>
<rect x="240" y="196" width="233" height="3" fill="#00c4c8"/>
<rect x="239" y="193" width="1" height="9" fill="#fff"/>
<rect x="474" y="194" width="1" height="7" fill="#00c4c8"/>
<rect x="475" y="195" width="1" height="5" fill="#00c4c8"/>
<rect x="476" y="196" width="1" height="3" fill="#00c4c8"/>
<rect x="477" y="197" width="1" height="1" fill="#00c4c8"/>
<rect x="473" y="192" width="1" height="11" fill="#fff"/>
<rect x="474" y="193" width="1" height="1" fill="#fff"/>
<rect x="474" y="201" width="1" height="1" fill="#fff"/>
<rect x="475" y="194" width="1" height="1" fill="#fff"/>
<rect x="475" y="200" width="1" height="1" fill="#fff"/>
<rect x="476" y="195" width="1" height="1" fill="#fff"/>
<rect x="476" y="199" width="1" height="1" fill="#fff"/>
<rect x="477" y="196" width="1" height="1" fill="#fff"/>
<rect x="477" y="198" width="1" height="1" fill="#fff"/>
<rect x="478" y="197" width="1" height="1" fill="#fff"/>
<rect x="456" y="199" width="1" height="2" fill="#fffc70"/>
<rect x="455" y="201" width="3" height="2" fill="#fffc70"/>
<g fill="#fff" transform="translate(0,189)"><use href="#S85" x="527"/><use href="#S110" x="533"/><use href="#S105" x="539"/><use href="#S82" x="545"/><use href="#S101" x="551"/><use href="#S102" x="557"/><use href="#S49" x="563"/><use href="#S48" x="569"/><use href="#S48" x="575"/><use href="#S95" x="581"/><use href="#S79" x="587"/><use href="#S56" x="593"/><use href="#S48" x="599"/><use href="#S52" x="605"/><use href="#S57" x="611"/><use href="#S52" x="617"/></g>
<rect x="249" y="207" width="229" height="3" fill="#00c4c8"/>
<rect x="248" y="204" width="1" height="9" fill="#fff"/>
<rect x="479" y="205" width="1" height="7" fill="#00c4c8"/>
<rect x="480" y="206" width="1" height="5" fill="#00c4c8"/>
<rect x="481" y="207" width="1" height="3" fill="#00c4c8"/>
<rect x="482" y="208" width="1" height="1" fill="#00c4c8"/>
<rect x="478" y="203" width="1" height="11" fill="#fff"/>
<rect x="479" y="204" width="1" height="1" fill="#fff"/>
<rect x="479" y="212" width="1" height="1" fill="#fff"/>
<rect x="480" y="205" width="1" height="1" fill="#fff"/>
<rect x="480" y="211" width="1" height="1" fill="#fff"/>
<rect x="481" y="206" width="1" height="1" fill="#fff"/>
<rect x="481" y="210" width="1" height="1" fill="#fff"/>
<rect x="482" y="207" width="1" height="1" fill="#fff"/>
<rect x="482" y="209" width="1" height="1" fill="#fff"/>
<rect x="483" y="208" width="1" height="1" fill="#fff"/>
<g fill="#fff" transform="translate(0,200)"><use href="#S85" x="527"/><use href="#S110" x="533"/><use href="#S105" x="539"/><use href="#S82" x="545"/><use href="#S101" x="551"/><use href="#S102" x="557"/><use href="#S49" x="563"/><use href="#S48" x="569"/><use href="#S48" x="575"/><use href="#S95" x="581"/><use href="#S66" x="587"/><use href="#S57" x="593"/><use href="#S73" x="599"/><use href="#S76" x="605"/><use href="#S57" x="611"/><use href="#S49" x="617"/></g>
<rect x="10" y="218" width="517" height="3" fill="#000032"/>
<rect x="249" y="218" width="229" height="3" fill="#00c4c8"/>
<rect x="452" y="218" width="3" height="1" fill="#000"/>
<rect x="452" y="220" width="3" height="1" fill="#000"/>
<rect x="248" y="215" width="1" height="9" fill="#fff"/>
<rect x="479" y="216" width="1" height="7" fill="#00c4c8"/>
<rect x="480" y="217" width="1" height="5" fill="#00c4c8"/>
<rect x="481" y="218" width="1" height="3" fill="#00c4c8"/>
<rect x="482" y="219" width="1" height="1" fill="#00c4c8"/>
<rect x="478" y="214" width="1" height="11" fill="#fff"/>
<rect x="479" y="215" width="1" height="1" fill="#fff"/>
<rect x="479" y="223" width="1" height="1" fill="#fff"/>
<rect x="480" y="216" width="1" height="1" fill="#fff"/>
<rect x="480" y="222" width="1" height="1" fill="#fff"/>
<rect x="481" y="217" width="1" height="1" fill="#fff"/>
<rect x="481" y="221" width="1" height="1" fill="#fff"/>
<rect x="482" y="218" width="1" height="1" fill="#fff"/>
<rect x="482" y="220" width="1" height="1" fill="#fff"/>
<rect x="483" y="219" width="1" height="1" fill="#fff"/>
<g fill="#fff" transform="translate(0,211)"><use href="#S85" x="527"/><use href="#S110" x="533"/><use href="#S105" x="539"/><use href="#S82" x="545"/><use href="#S101" x="551"/><use href="#S102" x="557"/><use href="#S49" x="563"/><use href="#S48" x="569"/><use href="#S48" x="575"/><use href="#S95" x="581"/><use href="#S65" x="587"/><use href="#S55" x="593"/><use href="#S80" x="599"/><use href="#S82" x="605"/><use href="#S90" x="611"/><use href="#S50" x="617"/></g>
<rect x="249" y="229" width="243" height="3" fill="#00a000"/>
<rect x="462" y="229" width="2" height="1" fill="#000"/>
<rect x="462" y="231" width="2" height="1" fill="#000"/>
<rect x="248" y="226" width="1" height="9" fill="#fff"/>
<rect x="493" y="227" width="1" height="7" fill="#00a000"/>
<rect x="494" y="228" width="1" height="5" fill="#00a000"/>
<rect x="495" y="229" width="1" height="3" fill="#00a000"/>
<rect x="496" y="230" width="1" height="1" fill="#00a000"/>
<rect x="492" y="225" width="1" height="11" fill="#fff"/>
<rect x="493" y="226" width="1" height="1" fill="#fff"/>
<rect x="493" y="234" width="1" height="1" fill="#fff"/>
<rect x="494" y="227" width="1" height="1" fill="#fff"/>
<rect x="494" y="233" width="1" height="1" fill="#fff"/>
<rect x="495" y="228" width="1" height="1" fill="#fff"/>
<rect x="495" y="232" width="1" height="1" fill="#fff"/>
<rect x="496" y="229" width="1" height="1" fill="#fff"/>
<rect x="496" y="231" width="1" height="1" fill="#fff"/>
<rect x="497" y="230" width="1" height="1" fill="#fff"/>
<g fill="#fff" transform="translate(0,222)"><use href="#S85" x="527"/><use href="#S110" x="533"/><use href="#S105" x="539"/><use href="#S82" x="545"/><use href="#S101" x="551"/><use href="#S102" x="557"/><use href="#S49" x="563"/><use href="#S48" x="569"/><use href="#S48" x="575"/><use href="#S95" x="581"/><use href="#S65" x="587"/><use href="#S53" x="593"/><use href="#S66" x="599"/><use href="#S73" x="605"/><use href="#S65" x="611"/><use href="#S54" x="617"/></g>
<rect x="10" y="240" width="517" height="3" fill="#000032"/>
<rect x="249" y="240" width="229" height="3" fill="#00c4c8"/>
<rect x="454" y="240" width="2" height="1" fill="#000"/>
<rect x="454" y="242" width="2" height="1" fill="#000"/>
<rect x="248" y="237" width="1" height="9" fill="#fff"/>
<rect x="479" y="238" width="1" height="7" fill="#00c4c8"/>
<rect x="480" y="239" width="1" height="5" fill="#00c4c8"/>
<rect x="481" y="240" width="1" height="3" fill="#00c4c8"/>
<rect x="482" y="241" width="1" height="1" fill="#00c4c8"/>
<rect x="478" y="236" width="1" height="11" fill="#fff"/>
<rect x="479" y="237" width="1" height="1" fill="#fff"/>
<rect x="479" y="245" width="1" height="1" fill="#fff"/>
<rect x="480" y="238" width="1" height="1" fill="#fff"/>
<rect x="480" y="244" width="1" height="1" fill="#fff"/>
<rect x="481" y="239" width="1" height="1" fill="#fff"/>
<rect x="481" y="243" width="1" height="1" fill="#fff"/>
<rect x="482" y="240" width="1" height="1" fill="#fff"/>
<rect x="482" y="242" width="1" height="1" fill="#fff"/>
<rect x="483" y="241" width="1" height="1" fill="#fff"/>
<g fill="#fff" transform="translate(0,233)"><use href="#S85" x="527"/><use href="#S110" x="533"/><use href="#S105" x="539"/><use href="#S82" x="545"/><use href="#S101" x="551"/><use href="#S102" x="557"/><use href="#S49" x="563"/><use href="#S48" x="569"/><use href="#S48" x="575"/><use href="#S95" x="581"/><use href="#S66" x="587"/><use href="#S57" x="593"/><use href="#S83" x="599"/><use href="#S84" x="605"/><use href="#S71" x="611"/><use href="#S51" x="617"/></g>
<rect x="240" y="251" width="233" height="3" fill="#00c4c8"/>
<rect x="239" y="248" width="1" height="9" fill="#fff"/>
<rect x="474" y="249" width="1" height="7" fill="#00c4c8"/>
<rect x="475" y="250" width="1" height="5" fill="#00c4c8"/>
<rect x="476" y="251" width="1" height="3" fill="#00c4c8"/>
<rect x="477" y="252" width="1" height="1" fill="#00c4c8"/>
<rect x="473" y="247" width="1" height="11" fill="#fff"/>
<rect x="474" y="248" width="1" height="1" fill="#fff"/>
<rect x="474" y="256" width="1" height="1" fill="#fff"/>
<rect x="475" y="249" width="1" height="1" fill="#fff"/>
<rect x="475" y="255" width="1" height="1" fill="#fff"/>
<rect x="476" y="250" width="1" height="1" fill="#fff"/>
<rect x="476" y="254" width="1" height="1" fill="#fff"/>
<rect x="477" y="251" width="1" height="1" fill="#fff"/>
<rect x="477" y="253" width="1" height="1" fill="#fff"/>
<rect x="478" y="252" width="1" height="1" fill="#fff"/>
<g fill="#fff" transform="translate(0,244)"><use href="#S85" x="527"/><use href="#S110" x="533"/><use href="#S105" x="539"/><use href="#S82" x="545"/><use href="#S101" x="551"/><use href="#S102" x="557"/><use href="#S49" x="563"/><use href="#S48" x="569"/><use href="#S48" x="575"/><use href="#S95" x="581"/><use href="#S81" x="587"/><use href="#S57" x="593"/><use href="#S67" x="599"/><use href="#S55" x="605"/><use href="#S74" x="611"/><use href="#S57" x="617"/></g>
<rect x="10" y="262" width="517" height="3" fill="#000032"/>
<rect x="249" y="262" width="224" height="3" fill="#00c4c8"/>
<rect x="248" y="259" width="1" height="9" fill="#fff"/>
<rect x="474" y="260" width="1" height="7" fill="#00c4c8"/>
<rect x="475" y="261" width="1" height="5" fill="#00c4c8"/>
<rect x="476" y="262" width="1" height="3" fill="#00c4c8"/>
<rect x="477" y="263" width="1" height="1" fill="#00c4c8"/>
<rect x="473" y="258" width="1" height="11" fill="#fff"/>
<rect x="474" y="259" width="1" height="1" fill="#fff"/>
<rect x="474" y="267" width="1" height="1" fill="#fff"/>
<rect x="475" y="260" width="1" height="1" fill="#fff"/>
<rect x="475" y="266" width="1" height="1" fill="#fff"/>
<rect x="476" y="261" width="1" height="1" fill="#fff"/>
<rect x="476" y="265" width="1" height="1" fill="#fff"/>
<rect x="477" y="262" width="1" height="1" fill="#fff"/>
<rect x="477" y="264" width="1" height="1" fill="#fff"/>
<rect x="478" y="263" width="1" height="1" fill="#fff"/>
<g fill="#fff" transform="translate(0,255)"><use href="#S85" x="527"/><use href="#S110" x="533"/><use href="#S105" x="539"/><use href="#S82" x="545"/><use href="#S101" x="551"/><use href="#S102" x="557"/><use href="#S49" x="563"/><use href="#S48" x="569"/><use href="#S48" x="575"/><use href="#S95" x="581"/><use href="#S81" x="587"/><use href="#S57" x="593"/><use href="#S67" x="599"/><use href="#S55" x="605"/><use href="#S75" x="611"/><use href="#S48" x="617"/></g>
<rect x="240" y="273" width="238" height="3" fill="#00a000"/>
<rect x="239" y="270" width="1" height="9" fill="#fff"/>
<rect x="479" y="271" width="1" height="7" fill="#00a000"/>
<rect x="480" y="272" width="1" height="5" fill="#00a000"/>
<rect x="481" y="273" width="1" height="3" fill="#00a000"/>
<rect x="482" y="274" width="1" height="1" fill="#00a000"/>
<rect x="478" y="269" width="1" height="11" fill="#fff"/>
<rect x="479" y="270" width="1" height="1" fill="#fff"/>
<rect x="479" y="278" width="1" height="1" fill="#fff"/>
<rect x="480" y="271" width="1" height="1" fill="#fff"/>
<rect x="480" y="277" width="1" height="1" fill="#fff"/>
<rect x="481" y="272" width="1" height="1" fill="#fff"/>
<rect x="481" y="276" width="1" height="1" fill="#fff"/>
<rect x="482" y="273" width="1" height="1" fill="#fff"/>
<rect x="482" y="275" width="1" height="1" fill="#fff"/>
<rect x="483" y="274" width="1" height="1" fill="#fff"/>
<g fill="#fff" transform="translate(0,266)"><use href="#S85" x="527"/><use href="#S110" x="533"/><use href="#S105" x="539"/><use href="#S82" x="545"/><use href="#S101" x="551"/><use href="#S102" x="557"/><use href="#S49" x="563"/><use href="#S48" x="569"/><use href="#S48" x="575"/><use href="#S95" x="581"/><use href="#S66" x="587"/><use href="#S57" x="593"/><use href="#S71" x="599"/><use href="#S77" x="605"/><use href="#S69" x="611"/><use href="#S57" x="617"/></g>
<rect x="10" y="284" width="517" height="3" fill="#000032"/>
<rect x="240" y="284" width="238" height="3" fill="#00a000"/>
<rect x="239" y="281" width="1" height="9" fill="#fff"/>
<rect x="479" y="282" width="1" height="7" fill="#00a000"/>
<rect x="480" y="283" width="1" height="5" fill="#00a000"/>
<rect x="481" y="284" width="1" height="3" fill="#00a000"/>
<rect x="482" y="285" width="1" height="1" fill="#00a000"/>
<rect x="478" y="280" width="1" height="11" fill="#fff"/>
<rect x="479" y="281" width="1" height="1" fill="#fff"/>
<rect x="479" y="289" width="1" height="1" fill="#fff"/>
<rect x="480" y="282" width="1" height="1" fill="#fff"/>
<rect x="480" y="288" width="1" height="1" fill="#fff"/>
<rect x="481" y="283" width="1" height="1" fill="#fff"/>
<rect x="481" y="287" width="1" height="1" fill="#fff"/>
<rect x="482" y="284" width="1" height="1" fill="#fff"/>
<rect x="482" y="286" width="1" height="1" fill="#fff"/>
<rect x="483" y="285" width="1" height="1" fill="#fff"/>
<g fill="#fff" transform="translate(0,277)"><use href="#S85" x="527"/><use href="#S110" x="533"/><use href="#S105" x="539"/><use href="#S82" x="545"/><use href="#S101" x="551"/><use href="#S102" x="557"/><use href="#S49" x="563"/><use href="#S48" x="569"/><use href="#S48" x="575"/><use href="#S95" x="581"/><use href="#S65" x="587"/><use href="#S57" x="593"/><use href="#S80" x="599"/><use href="#S69" x="605"/><use href="#S73" x="611"/><use href="#S52" x="617"/></g>
<rect x="249" y="295" width="229" height="3" fill="#00a000"/>
<rect x="248" y="292" width="1" height="9" fill="#fff"/>
<rect x="479" y="293" width="1" height="7" fill="#00a000"/>
<rect x="480" y="294" width="1" height="5" fill="#00a000"/>
<rect x="481" y="295" width="1" height="3" fill="#00a000"/>
<rect x="482" y="296" width="1" height="1" fill="#00a000"/>
<rect x="478" y="291" width="1" height="11" fill="#fff"/>
<rect x="479" y="292" width="1" height="1" fill="#fff"/>
<rect x="479" y="300" width="1" height="1" fill="#fff"/>
<rect x="480" y="293" width="1" height="1" fill="#fff"/>
<rect x="480" y="299" width="1" height="1" fill="#fff"/>
<rect x="481" y="294" width="1" height="1" fill="#fff"/>
<rect x="481" y="298" width="1" height="1" fill="#fff"/>
<rect x="482" y="295" width="1" height="1" fill="#fff"/>
<rect x="482" y="297" width="1" height="1" fill="#fff"/>
<rect x="483" y="296" width="1" height="1" fill="#fff"/>
<g fill="#fff" transform="translate(0,288)"><use href="#S85" x="527"/><use href="#S110" x="533"/><use href="#S105" x="539"/><use href="#S82" x="545"/><use href="#S101" x="551"/><use href="#S102" x="557"/><use href="#S49" x="563"/><use href="#S48" x="569"/><use href="#S48" x="575"/><use href="#S95" x="581"/><use href="#S65" x="587"/><use href="#S55" x="593"/><use href="#S81" x="599"/><use href="#S90" x="605"/><use href="#S48" x="611"/><use href="#S54" x="617"/></g>
<rect x="10" y="306" width="517" height="3" fill="#000032"/>
<rect x="240" y="306" width="233" height="3" fill="#00a000"/>
<rect x="239" y="303" width="1" height="9" fill="#fff"/>
<rect x="474" y="304" width="1" height="7" fill="#00a000"/>
<rect x="475" y="305" width="1" height="5" fill="#00a000"/>
<rect x="476" y="306" width="1" height="3" fill="#00a000"/>
<rect x="477" y="307" width="1" height="1" fill="#00a000"/>
<rect x="473" y="302" width="1" height="11" fill="#fff"/>
<rect x="474" y="303" width="1" height="1" fill="#fff"/>
<rect x="474" y="311" width="1" height="1" fill="#fff"/>
<rect x="475" y="304" width="1" height="1" fill="#fff"/>
<rect x="475" y="310" width="1" height="1" fill="#fff"/>
<rect x="476" y="305" width="1" height="1" fill="#fff"/>
<rect x="476" y="309" width="1" height="1" fill="#fff"/>
<rect x="477" y="306" width="1" height="1" fill="#fff"/>
<rect x="477" y="308" width="1" height="1" fill="#fff"/>
<rect x="478" y="307" width="1" height="1" fill="#fff"/>
<g fill="#fff" transform="translate(0,299)"><use href="#S85" x="527"/><use href="#S110" x="533"/><use href="#S105" x="539"/><use href="#S82" x="545"/><use href="#S101" x="551"/><use href="#S102" x="557"/><use href="#S49" x="563"/><use href="#S48" x="569"/><use href="#S48" x="575"/><use href="#S95" x="581"/><use href="#S66" x="587"/><use href="#S57" x="593"/><use href="#S71" x="599"/><use href="#S77" x="605"/><use href="#S69" x="611"/><use href="#S56" x="617"/></g>
<rect x="249" y="317" width="229" height="3" fill="#00c4c8"/>
<rect x="452" y="317" width="3" height="1" fill="#000"/>
<rect x="452" y="319" width="3" height="1" fill="#000"/>
<rect x="248" y="314" width="1" height="9" fill="#fff"/>
<rect x="479" y="315" width="1" height="7" fill="#00c4c8"/>
<rect x="480" y="316" width="1" height="5" fill="#00c4c8"/>
<rect x="481" y="317" width="1" height="3" fill="#00c4c8"/>
<rect x="482" y="318" width="1" height="1" fill="#00c4c8"/>
<rect x="478" y="313" width="1" height="11" fill="#fff"/>
<rect x="479" y="314" width="1" height="1" fill="#fff"/>
<rect x="479" y="322" width="1" height="1" fill="#fff"/>
<rect x="480" y="315" width="1" height="1" fill="#fff"/>
<rect x="480" y="321" width="1" height="1" fill="#fff"/>
<rect x="481" y="316" width="1" height="1" fill="#fff"/>
<rect x="481" y="320" width="1" height="1" fill="#fff"/>
<rect x="482" y="317" width="1" height="1" fill="#fff"/>
<rect x="482" y="319" width="1" height="1" fill="#fff"/>
<rect x="483" y="318" width="1" height="1" fill="#fff"/>
<g fill="#fff" transform="translate(0,310)"><use href="#S85" x="527"/><use href="#S110" x="533"/><use href="#S105" x="539"/><use href="#S82" x="545"/><use href="#S101" x="551"/><use href="#S102" x="557"/><use href="#S49" x="563"/><use href="#S48" x="569"/><use href="#S48" x="575"/><use href="#S95" x="581"/><use href="#S85" x="587"/><use href="#S80" x="593"/><use href="#S73" x="599"/><use href="#S48" x="605"/><use href="#S48" x="611"/><use href="#S48" x="617"/><use href="#S46" x="623"/><use href="#S46" x="629"/></g>
<rect x="10" y="328" width="517" height="3" fill="#000032"/>
<rect x="249" y="328" width="229" height="3" fill="#00c4c8"/>
<rect x="248" y="325" width="1" height="9" fill="#fff"/>
<rect x="479" y="326" width="1" height="7" fill="#00c4c8"/>
<rect x="480" y="327" width="1" height="5" fill="#00c4c8"/>
<rect x="481" y="328" width="1" height="3" fill="#00c4c8"/>
<rect x="482" y="329" width="1" height="1" fill="#00c4c8"/>
<rect x="478" y="324" width="1" height="11" fill="#fff"/>
<rect x="479" y="325" width="1" height="1" fill="#fff"/>
<rect x="479" y="333" width="1" height="1" fill="#fff"/>
<rect x="480" y="326" width="1" height="1" fill="#fff"/>
<rect x="480" y="332" width="1" height="1" fill="#fff"/>
<rect x="481" y="327" width="1" height="1" fill="#fff"/>
<rect x="481" y="331" width="1" height="1" fill="#fff"/>
<rect x="482" y="328" width="1" height="1" fill="#fff"/>
<rect x="482" y="330" width="1" height="1" fill="#fff"/>
<rect x="483" y="329" width="1" height="1" fill="#fff"/>
<g fill="#fff" transform="translate(0,321)"><use href="#S85" x="527"/><use href="#S110" x="533"/><use href="#S105" x="539"/><use href="#S82" x="545"/><use href="#S101" x="551"/><use href="#S102" x="557"/><use href="#S49" x="563"/><use href="#S48" x="569"/><use href="#S48" x="575"/><use href="#S95" x="581"/><use href="#S66" x="587"/><use href="#S57" x="593"/><use href="#S82" x="599"/><use href="#S74" x="605"/><use href="#S52" x="611"/><use href="#S53" x="617"/></g>
<rect x="249" y="339" width="229" height="3" fill="#00a000"/>
<rect x="248" y="336" width="1" height="9" fill="#fff"/>
<rect x="479" y="337" width="1" height="7" fill="#00a000"/>
<rect x="480" y="338" width="1" height="5" fill="#00a000"/>
<rect x="481" y="339" width="1" height="3" fill="#00a000"/>
<rect x="482" y="340" width="1" height="1" fill="#00a000"/>
<rect x="478" y="335" width="1" height="11" fill="#fff"/>
<rect x="479" y="336" width="1" height="1" fill="#fff"/>
<rect x="479" y="344" width="1" height="1" fill="#fff"/>
<rect x="480" y="337" width="1" height="1" fill="#fff"/>
<rect x="480" y="343" width="1" height="1" fill="#fff"/>
<rect x="481" y="338" width="1" height="1" fill="#fff"/>
<rect x="481" y="342" width="1" height="1" fill="#fff"/>
<rect x="482" y="339" width="1" height="1" fill="#fff"/>
<rect x="482" y="341" width="1" height="1" fill="#fff"/>
<rect x="483" y="340" width="1" height="1" fill="#fff"/>
<g fill="#fff" transform="translate(0,332)"><use href="#S85" x="527"/><use href="#S110" x="533"/><use href="#S105" x="539"/><use href="#S82" x="545"/><use href="#S101" x="551"/><use href="#S102" x="557"/><use href="#S49" x="563"/><use href="#S48" x="569"/><use href="#S48" x="575"/><use href="#S95" x="581"/><use href="#S66" x="587"/><use href="#S55" x="593"/><use href="#S70" x="599"/><use href="#S72" x="605"/><use href="#S78" x="611"/><use href="#S56" x="617"/></g>
<rect x="10" y="350" width="517" height="3" fill="#000032"/>
<rect x="249" y="350" width="229" height="3" fill="#00c4c8"/>
<rect x="452" y="350" width="3" height="1" fill="#000"/>
<rect x="452" y="352" width="3" height="1" fill="#000"/>
<rect x="248" y="347" width="1" height="9" fill="#fff"/>
<rect x="479" y="348" width="1" height="7" fill="#00c4c8"/>
<rect x="480" y="349" width="1" height="5" fill="#00c4c8"/>
<rect x="481" y="350" width="1" height="3" fill="#00c4c8"/>
<rect x="482" y="351" width="1" height="1" fill="#00c4c8"/>
<rect x="478" y="346" width="1" height="11" fill="#fff"/>
<rect x="479" y="347" width="1" height="1" fill="#fff"/>
<rect x="479" y="355" width="1" height="1" fill="#fff"/>
<rect x="480" y="348" width="1" height="1" fill="#fff"/>
<rect x="480" y="354" width="1" height="1" fill="#fff"/>
<rect x="481" y="349" width="1" height="1" fill="#fff"/>
<rect x="481" y="353" width="1" height="1" fill="#fff"/>
<rect x="482" y="350" width="1" height="1" fill="#fff"/>
<rect x="482" y="352" width="1" height="1" fill="#fff"/>
<rect x="483" y="351" width="1" height="1" fill="#fff"/>
<g fill="#fff" transform="translate(0,343)"><use href="#S85" x="527"/><use href="#S110" x="533"/><use href="#S105" x="539"/><use href="#S82" x="545"/><use href="#S101" x="551"/><use href="#S102" x="557"/><use href="#S49" x="563"/><use href="#S48" x="569"/><use href="#S48" x="575"/><use href="#S95" x="581"/><use href="#S65" x="587"/><use href="#S55" x="593"/><use href="#S81" x="599"/><use href="#S90" x="605"/><use href="#S49" x="611"/><use href="#S50" x="617"/></g>
<rect x="249" y="361" width="253" height="3" fill="#00a000"/>
<rect x="248" y="358" width="1" height="9" fill="#fff"/>
<rect x="503" y="359" width="1" height="7" fill="#00a000"/>
<rect x="504" y="360" width="1" height="5" fill="#00a000"/>
<rect x="505" y="361" width="1" height="3" fill="#00a000"/>
<rect x="506" y="362" width="1" height="1" fill="#00a000"/>
<rect x="502" y="357" width="1" height="11" fill="#fff"/>
<rect x="503" y="358" width="1" height="1" fill="#fff"/>
<rect x="503" y="366" width="1" height="1" fill="#fff"/>
<rect x="504" y="359" width="1" height="1" fill="#fff"/>
<rect x="504" y="365" width="1" height="1" fill="#fff"/>
<rect x="505" y="360" width="1" height="1" fill="#fff"/>
<rect x="505" y="364" width="1" height="1" fill="#fff"/>
<rect x="506" y="361" width="1" height="1" fill="#fff"/>
<rect x="506" y="363" width="1" height="1" fill="#fff"/>
<rect x="507" y="362" width="1" height="1" fill="#fff"/>
<rect x="467" y="364" width="1" height="2" fill="#fffc70"/>
<rect x="466" y="366" width="3" height="2" fill="#fffc70"/>
<g fill="#fff" transform="translate(0,354)"><use href="#S85" x="527"/><use href="#S110" x="533"/><use href="#S105" x="539"/><use href="#S82" x="545"/><use href="#S101" x="551"/><use href="#S102" x="557"/><use href="#S49" x="563"/><use href="#S48" x="569"/><use href="#S48" x="575"/><use href="#S95" x="581"/><use href="#S66" x="587"/><use href="#S57" x="593"/><use href="#S82" x="599"/><use href="#S70" x="605"/><use href="#S69" x="611"/><use href="#S56" x="617"/></g>
<rect x="10" y="372" width="517" height="3" fill="#000032"/>
<rect x="245" y="372" width="233" height="3" fill="#00a000"/>
<rect x="244" y="369" width="1" height="9" fill="#fff"/>
<rect x="479" y="370" width="1" height="7" fill="#00a000"/>
<rect x="480" y="371" width="1" height="5" fill="#00a000"/>
<rect x="481" y="372" width="1" height="3" fill="#00a000"/>
<rect x="482" y="373" width="1" height="1" fill="#00a000"/>
<rect x="478" y="368" width="1" height="11" fill="#fff"/>
<rect x="479" y="369" width="1" height="1" fill="#fff"/>
<rect x="479" y="377" width="1" height="1" fill="#fff"/>
<rect x="480" y="370" width="1" height="1" fill="#fff"/>
<rect x="480" y="376" width="1" height="1" fill="#fff"/>
<rect x="481" y="371" width="1" height="1" fill="#fff"/>
<rect x="481" y="375" width="1" height="1" fill="#fff"/>
<rect x="482" y="372" width="1" height="1" fill="#fff"/>
<rect x="482" y="374" width="1" height="1" fill="#fff"/>
<rect x="483" y="373" width="1" height="1" fill="#fff"/>
<g fill="#fff" transform="translate(0,365)"><use href="#S85" x="527"/><use href="#S110" x="533"/><use href="#S105" x="539"/><use href="#S82" x="545"/><use href="#S101" x="551"/><use href="#S102" x="557"/><use href="#S49" x="563"/><use href="#S48" x="569"/><use href="#S48" x="575"/><use href="#S95" x="581"/><use href="#S66" x="587"/><use href="#S57" x="593"/><use href="#S82" x="599"/><use href="#S70" x="605"/><use href="#S84" x="611"/><use href="#S52" x="617"/></g>
<rect x="249" y="383" width="229" height="3" fill="#00a000"/>
<rect x="248" y="380" width="1" height="9" fill="#fff"/>
<rect x="479" y="381" width="1" height="7" fill="#00a000"/>
<rect x="480" y="382" width="1" height="5" fill="#00a000"/>
<rect x="481" y="383" width="1" height="3" fill="#00a000"/>
<rect x="482" y="384" width="1" height="1" fill="#00a000"/>
<rect x="478" y="379" width="1" height="11" fill="#fff"/>
<rect x="479" y="380" width="1" height="1" fill="#fff"/>
<rect x="479" y="388" width="1" height="1" fill="#fff"/>
<rect x="480" y="381" width="1" height="1" fill="#fff"/>
<rect x="480" y="387" width="1" height="1" fill="#fff"/>
<rect x="481" y="382" width="1" height="1" fill="#fff"/>
<rect x="481" y="386" width="1" height="1" fill="#fff"/>
<rect x="482" y="383" width="1" height="1" fill="#fff"/>
<rect x="482" y="385" width="1" height="1" fill="#fff"/>
<rect x="483" y="384" width="1" height="1" fill="#fff"/>
<g fill="#fff" transform="translate(0,376)"><use href="#S85" x="527"/><use href="#S110" x="533"/><use href="#S105" x="539"/><use href="#S82" x="545"/><use href="#S101" x="551"/><use href="#S102" x="557"/><use href="#S49" x="563"/><use href="#S48" x="569"/><use href="#S48" x="575"/><use href="#S95" x="581"/><use href="#S66" x="587"/><use href="#S57" x="593"/><use href="#S72" x="599"/><use href="#S66" x="605"/><use href="#S56" x="611"/><use href="#S53" x="617"/></g>
<rect x="10" y="394" width="517" height="3" fill="#000032"/>
<rect x="249" y="394" width="224" height="3" fill="#00a000"/>
<rect x="450" y="394" width="3" height="1" fill="#000"/>
<rect x="450" y="396" width="3" height="1" fill="#000"/>
<rect x="248" y="391" width="1" height="9" fill="#fff"/>
<rect x="474" y="392" width="1" height="7" fill="#00a000"/>
<rect x="475" y="393" width="1" height="5" fill="#00a000"/>
<rect x="476" y="394" width="1" height="3" fill="#00a000"/>
<rect x="477" y="395" width="1" height="1" fill="#00a000"/>
<rect x="473" y="390" width="1" height="11" fill="#fff"/>
<rect x="474" y="391" width="1" height="1" fill="#fff"/>
<rect x="474" y="399" width="1" height="1" fill="#fff"/>
<rect x="475" y="392" width="1" height="1" fill="#fff"/>
<rect x="475" y="398" width="1" height="1" fill="#fff"/>
<rect x="476" y="393" width="1" height="1" fill="#fff"/>
<rect x="476" y="397" width="1" height="1" fill="#fff"/>
<rect x="477" y="394" width="1" height="1" fill="#fff"/>
<rect x="477" y="396" width="1" height="1" fill="#fff"/>
<rect x="478" y="395" width="1" height="1" fill="#fff"/>
<g fill="#fff" transform="translate(0,387)"><use href="#S85" x="527"/><use href="#S110" x="533"/><use href="#S105" x="539"/><use href="#S82" x="545"/><use href="#S101" x="551"/><use href="#S102" x="557"/><use href="#S49" x="563"/><use href="#S48" x="569"/><use href="#S48" x="575"/><use href="#S95" x="581"/><use href="#S67" x="587"/><use href="#S54" x="593"/><use href="#S84" x="599"/><use href="#S74" x="605"/><use href="#S70" x="611"/><use href="#S53" x="617"/></g>
<rect x="249" y="405" width="229" height="3" fill="#00a000"/>
<rect x="248" y="402" width="1" height="9" fill="#fff"/>
<rect x="479" y="403" width="1" height="7" fill="#00a000"/>
<rect x="480" y="404" width="1" height="5" fill="#00a000"/>
<rect x="481" y="405" width="1" height="3" fill="#00a000"/>
<rect x="482" y="406" width="1" height="1" fill="#00a000"/>
<rect x="478" y="401" width="1" height="11" fill="#fff"/>
<rect x="479" y="402" width="1" height="1" fill="#fff"/>
<rect x="479" y="410" width="1" height="1" fill="#fff"/>
<rect x="480" y="403" width="1" height="1" fill="#fff"/>
<rect x="480" y="409" width="1" height="1" fill="#fff"/>
<rect x="481" y="404" width="1" height="1" fill="#fff"/>
<rect x="481" y="408" width="1" height="1" fill="#fff"/>
<rect x="482" y="405" width="1" height="1" fill="#fff"/>
<rect x="482" y="407" width="1" height="1" fill="#fff"/>
<rect x="483" y="406" width="1" height="1" fill="#fff"/>
<g fill="#fff" transform="translate(0,398)"><use href="#S85" x="527"/><use href="#S110" x="533"/><use href="#S105" x="539"/><use href="#S82" x="545"/><use href="#S101" x="551"/><use href="#S102" x="557"/><use href="#S49" x="563"/><use href="#S48" x="569"/><use href="#S48" x="575"/><use href="#S95" x="581"/><use href="#S66" x="587"/><use href="#S57" x="593"/><use href="#S82" x="599"/><use href="#S74" x="605"/><use href="#S52" x="611"/><use href="#S52" x="617"/></g>
<rect x="10" y="416" width="517" height="3" fill="#000032"/>
<rect x="249" y="416" width="229" height="3" fill="#00a000"/>
<rect x="248" y="413" width="1" height="9" fill="#fff"/>
<rect x="479" y="414" width="1" height="7" fill="#00a000"/>
<rect x="480" y="415" width="1" height="5" fill="#00a000"/>
<rect x="481" y="416" width="1" height="3" fill="#00a000"/>
<rect x="482" y="417" width="1" height="1" fill="#00a000"/>
<rect x="478" y="412" width="1" height="11" fill="#fff"/>
<rect x="479" y="413" width="1" height="1" fill="#fff"/>
<rect x="479" y="421" width="1" height="1" fill="#fff"/>
<rect x="480" y="414" width="1" height="1" fill="#fff"/>
<rect x="480" y="420" width="1" height="1" fill="#fff"/>
<rect x="481" y="415" width="1" height="1" fill="#fff"/>
<rect x="481" y="419" width="1" height="1" fill="#fff"/>
<rect x="482" y="416" width="1" height="1" fill="#fff"/>
<rect x="482" y="418" width="1" height="1" fill="#fff"/>
<rect x="483" y="417" width="1" height="1" fill="#fff"/>
<g fill="#fff" transform="translate(0,409)"><use href="#S85" x="527"/><use href="#S110" x="533"/><use href="#S105" x="539"/><use href="#S82" x="545"/><use href="#S101" x="551"/><use href="#S102" x="557"/><use href="#S49" x="563"/><use href="#S48" x="569"/><use href="#S48" x="575"/><use href="#S95" x="581"/><use href="#S66" x="587"/><use href="#S57" x="593"/><use href="#S73" x="599"/><use href="#S76" x="605"/><use href="#S56" x="611"/><use href="#S56" x="617"/></g>
<rect x="240" y="427" width="233" height="3" fill="#00a000"/>
<rect x="239" y="424" width="1" height="9" fill="#fff"/>
<rect x="474" y="425" width="1" height="7" fill="#00a000"/>
<rect x="475" y="426" width="1" height="5" fill="#00a000"/>
<rect x="476" y="427" width="1" height="3" fill="#00a000"/>
<rect x="477" y="428" width="1" height="1" fill="#00a000"/>
<rect x="473" y="423" width="1" height="11" fill="#fff"/>
<rect x="474" y="424" width="1" height="1" fill="#fff"/>
<rect x="474" y="432" width="1" height="1" fill="#fff"/>
<rect x="475" y="425" width="1" height="1" fill="#fff"/>
<rect x="475" y="431" width="1" height="1" fill="#fff"/>
<rect x="476" y="426" width="1" height="1" fill="#fff"/>
<rect x="476" y="430" width="1" height="1" fill="#fff"/>
<rect x="477" y="427" width="1" height="1" fill="#fff"/>
<rect x="477" y="429" width="1" height="1" fill="#fff"/>
<rect x="478" y="428" width="1" height="1" fill="#fff"/>
<g fill="#fff" transform="translate(0,420)"><use href="#S85" x="527"/><use href="#S110" x="533"/><use href="#S105" x="539"/><use href="#S82" x="545"/><use href="#S101" x="551"/><use href="#S102" x="557"/><use href="#S49" x="563"/><use href="#S48" x="569"/><use href="#S48" x="575"/><use href="#S95" x="581"/><use href="#S67" x="587"/><use href="#S54" x="593"/><use href="#S84" x="599"/><use href="#S77" x="605"/><use href="#S53" x="611"/><use href="#S53" x="617"/></g>
<rect x="10" y="438" width="517" height="3" fill="#000032"/>
<rect x="249" y="438" width="258" height="3" fill="#00a000"/>
<rect x="476" y="438" width="3" height="1" fill="#000"/>
<rect x="476" y="440" width="3" height="1" fill="#000"/>
<rect x="248" y="435" width="1" height="9" fill="#fff"/>
<rect x="508" y="436" width="1" height="7" fill="#00a000"/>
<rect x="509" y="437" width="1" height="5" fill="#00a000"/>
<rect x="510" y="438" width="1" height="3" fill="#00a000"/>
<rect x="511" y="439" width="1" height="1" fill="#00a000"/>
<rect x="507" y="434" width="1" height="11" fill="#fff"/>
<rect x="508" y="435" width="1" height="1" fill="#fff"/>
<rect x="508" y="443" width="1" height="1" fill="#fff"/>
<rect x="509" y="436" width="1" height="1" fill="#fff"/>
<rect x="509" y="442" width="1" height="1" fill="#fff"/>
<rect x="510" y="437" width="1" height="1" fill="#fff"/>
<rect x="510" y="441" width="1" height="1" fill="#fff"/>
<rect x="511" y="438" width="1" height="1" fill="#fff"/>
<rect x="511" y="440" width="1" height="1" fill="#fff"/>
<rect x="512" y="439" width="1" height="1" fill="#fff"/>
<rect x="454" y="441" width="1" height="2" fill="#fffc70"/>
<rect x="453" y="443" width="3" height="2" fill="#fffc70"/>
<g fill="#fff" transform="translate(0,431)"><use href="#S85" x="527"/><use href="#S110" x="533"/><use href="#S105" x="539"/><use href="#S82" x="545"/><use href="#S101" x="551"/><use href="#S102" x="557"/><use href="#S49" x="563"/><use href="#S48" x="569"/><use href="#S48" x="575"/><use href="#S95" x="581"/><use href="#S81" x="587"/><use href="#S57" x="593"/><use href="#S70" x="599"/><use href="#S76" x="605"/><use href="#S85" x="611"/><use href="#S55" x="617"/></g>
<rect x="249" y="449" width="224" height="3" fill="#00a000"/>
<rect x="248" y="446" width="1" height="9" fill="#fff"/>
<rect x="474" y="447" width="1" height="7" fill="#00a000"/>
<rect x="475" y="448" width="1" height="5" fill="#00a000"/>
<rect x="476" y="449" width="1" height="3" fill="#00a000"/>
<rect x="477" y="450" width="1" height="1" fill="#00a000"/>
<rect x="473" y="445" width="1" height="11" fill="#fff"/>
<rect x="474" y="446" width="1" height="1" fill="#fff"/>
<rect x="474" y="454" width="1" height="1" fill="#fff"/>
<rect x="475" y="447" width="1" height="1" fill="#fff"/>
<rect x="475" y="453" width="1" height="1" fill="#fff"/>
<rect x="476" y="448" width="1" height="1" fill="#fff"/>
<rect x="476" y="452" width="1" height="1" fill="#fff"/>
<rect x="477" y="449" width="1" height="1" fill="#fff"/>
<rect x="477" y="451" width="1" height="1" fill="#fff"/>
<rect x="478" y="450" width="1" height="1" fill="#fff"/>
<g fill="#fff" transform="translate(0,442)"><use href="#S85" x="527"/><use href="#S110" x="533"/><use href="#S105" x="539"/><use href="#S82" x="545"/><use href="#S101" x="551"/><use href="#S102" x="557"/><use href="#S49" x="563"/><use href="#S48" x="569"/><use href="#S48" x="575"/><use href="#S95" x="581"/><use href="#S85" x="587"/><use href="#S80" x="593"/><use href="#S73" x="599"/><use href="#S48" x="605"/><use href="#S48" x="611"/><use href="#S48" x="617"/><use href="#S46" x="623"/><use href="#S46" x="629"/></g>
<rect x="10" y="460" width="517" height="3" fill="#000032"/>
<rect x="249" y="460" width="224" height="3" fill="#00a000"/>
<rect x="248" y="457" width="1" height="9" fill="#fff"/>
<rect x="474" y="458" width="1" height="7" fill="#00a000"/>
<rect x="475" y="459" width="1" height="5" fill="#00a000"/>
<rect x="476" y="460" width="1" height="3" fill="#00a000"/>
<rect x="477" y="461" width="1" height="1" fill="#00a000"/>
<rect x="473" y="456" width="1" height="11" fill="#fff"/>
<rect x="474" y="457" width="1" height="1" fill="#fff"/>
<rect x="474" y="465" width="1" height="1" fill="#fff"/>
<rect x="475" y="458" width="1" height="1" fill="#fff"/>
<rect x="475" y="464" width="1" height="1" fill="#fff"/>
<rect x="476" y="459" width="1" height="1" fill="#fff"/>
<rect x="476" y="463" width="1" height="1" fill="#fff"/>
<rect x="477" y="460" width="1" height="1" fill="#fff"/>
<rect x="477" y="462" width="1" height="1" fill="#fff"/>
<rect x="478" y="461" width="1" height="1" fill="#fff"/>
<g fill="#fff" transform="translate(0,453)"><use href="#S85" x="527"/><use href="#S110" x="533"/><use href="#S105" x="539"/><use href="#S82" x="545"/><use href="#S101" x="551"/><use href="#S102" x="557"/><use href="#S49" x="563"/><use href="#S48" x="569"/><use href="#S48" x="575"/><use href="#S95" x="581"/><use href="#S65" x="587"/><use href="#S55" x="593"/><use href="#S81" x="599"/><use href="#S90" x="605"/><use href="#S48" x="611"/><use href="#S57" x="617"/></g>
<rect x="249" y="471" width="224" height="3" fill="#00a000"/>
<rect x="248" y="468" width="1" height="9" fill="#fff"/>
<rect x="474" y="469" width="1" height="7" fill="#00a000"/>
<rect x="475" y="470" width="1" height="5" fill="#00a000"/>
<rect x="476" y="471" width="1" height="3" fill="#00a000"/>
<rect x="477" y="472" width="1" height="1" fill="#00a000"/>
<rect x="473" y="467" width="1" height="11" fill="#fff"/>
<rect x="474" y="468" width="1" height="1" fill="#fff"/>
<rect x="474" y="476" width="1" height="1" fill="#fff"/>
<rect x="475" y="469" width="1" height="1" fill="#fff"/>
<rect x="475" y="475" width="1" height="1" fill="#fff"/>
<rect x="476" y="470" width="1" height="1" fill="#fff"/>
<rect x="476" y="474" width="1" height="1" fill="#fff"/>
<rect x="477" y="471" width="1" height="1" fill="#fff"/>
<rect x="477" y="473" width="1" height="1" fill="#fff"/>
<rect x="478" y="472" width="1" height="1" fill="#fff"/>
<g fill="#fff" transform="translate(0,464)"><use href="#S85" x="527"/><use href="#S110" x="533"/><use href="#S105" x="539"/><use href="#S82" x="545"/><use href="#S101" x="551"/><use href="#S102" x="557"/><use href="#S49" x="563"/><use href="#S48" x="569"/><use href="#S48" x="575"/><use href="#S95" x="581"/><use href="#S65" x="587"/><use href="#S53" x="593"/><use href="#S65" x="599"/><use href="#S78" x="605"/><use href="#S80" x="611"/><use href="#S54" x="617"/></g>
<rect x="10" y="482" width="517" height="3" fill="#000032"/>
<rect x="249" y="482" width="229" height="3" fill="#00a000"/>
<rect x="248" y="479" width="1" height="9" fill="#fff"/>
<rect x="479" y="480" width="1" height="7" fill="#00a000"/>
<rect x="480" y="481" width="1" height="5" fill="#00a000"/>
<rect x="481" y="482" width="1" height="3" fill="#00a000"/>
<rect x="482" y="483" width="1" height="1" fill="#00a000"/>
<rect x="478" y="478" width="1" height="11" fill="#fff"/>
<rect x="479" y="479" width="1" height="1" fill="#fff"/>
<rect x="479" y="487" width="1" height="1" fill="#fff"/>
<rect x="480" y="480" width="1" height="1" fill="#fff"/>
<rect x="480" y="486" width="1" height="1" fill="#fff"/>
<rect x="481" y="481" width="1" height="1" fill="#fff"/>
<rect x="481" y="485" width="1" height="1" fill="#fff"/>
<rect x="482" y="482" width="1" height="1" fill="#fff"/>
<rect x="482" y="484" width="1" height="1" fill="#fff"/>
<rect x="483" y="483" width="1" height="1" fill="#fff"/>
<rect x="435" y="485" width="1" height="2" fill="#fffc70"/>
<rect x="434" y="487" width="3" height="2" fill="#fffc70"/>
<g fill="#fff" transform="translate(0,475)"><use href="#S85" x="527"/><use href="#S110" x="533"/><use href="#S105" x="539"/><use href="#S82" x="545"/><use href="#S101" x="551"/><use href="#S102" x="557"/><use href="#S49" x="563"/><use href="#S48" x="569"/><use href="#S48" x="575"/><use href="#S95" x="581"/><use href="#S66" x="587"/><use href="#S56" x="593"/><use href="#S65" x="599"/><use href="#S69" x="605"/><use href="#S86" x="611"/><use href="#S57" x="617"/></g>
<rect x="249" y="493" width="229" height="3" fill="#00a000"/>
<rect x="248" y="490" width="1" height="9" fill="#fff"/>
<rect x="479" y="491" width="1" height="7" fill="#00a000"/>
<rect x="480" y="492" width="1" height="5" fill="#00a000"/>
<rect x="481" y="493" width="1" height="3" fill="#00a000"/>
<rect x="482" y="494" width="1" height="1" fill="#00a000"/>
<rect x="478" y="489" width="1" height="11" fill="#fff"/>
<rect x="479" y="490" width="1" height="1" fill="#fff"/>
<rect x="479" y="498" width="1" height="1" fill="#fff"/>
<rect x="480" y="491" width="1" height="1" fill="#fff"/>
<rect x="480" y="497" width="1" height="1" fill="#fff"/>
<rect x="481" y="492" width="1" height="1" fill="#fff"/>
<rect x="481" y="496" width="1" height="1" fill="#fff"/>
<rect x="482" y="493" width="1" height="1" fill="#fff"/>
<rect x="482" y="495" width="1" height="1" fill="#fff"/>
<rect x="483" y="494" width="1" height="1" fill="#fff"/>
<g fill="#fff" transform="translate(0,486)"><use href="#S85" x="527"/><use href="#S110" x="533"/><use href="#S105" x="539"/><use href="#S82" x="545"/><use href="#S101" x="551"/><use href="#S102" x="557"/><use href="#S49" x="563"/><use href="#S48" x="569"/><use href="#S48" x="575"/><use href="#S95" x="581"/><use href="#S81" x="587"/><use href="#S54" x="593"/><use href="#S75" x="599"/><use href="#S51" x="605"/><use href="#S70" x="611"/><use href="#S51" x="617"/></g>
<rect x="10" y="504" width="517" height="3" fill="#000032"/>
<rect x="249" y="504" width="229" height="3" fill="#00a000"/>
<rect x="248" y="501" width="1" height="9" fill="#fff"/>
<rect x="479" y="502" width="1" height="7" fill="#00a000"/>
<rect x="480" y="503" width="1" height="5" fill="#00a000"/>
<rect x="481" y="504" width="1" height="3" fill="#00a000"/>
<rect x="482" y="505" width="1" height="1" fill="#00a000"/>
<rect x="478" y="500" width="1" height="11" fill="#fff"/>
<rect x="479" y="501" width="1" height="1" fill="#fff"/>
<rect x="479" y="509" width="1" height="1" fill="#fff"/>
<rect x="480" y="502" width="1" height="1" fill="#fff"/>
<rect x="480" y="508" width="1" height="1" fill="#fff"/>
<rect x="481" y="503" width="1" height="1" fill="#fff"/>
<rect x="481" y="507" width="1" height="1" fill="#fff"/>
<rect x="482" y="504" width="1" height="1" fill="#fff"/>
<rect x="482" y="506" width="1" height="1" fill="#fff"/>
<rect x="483" y="505" width="1" height="1" fill="#fff"/>
<g fill="#fff" transform="translate(0,497)"><use href="#S85" x="527"/><use href="#S110" x="533"/><use href="#S105" x="539"/><use href="#S82" x="545"/><use href="#S101" x="551"/><use href="#S102" x="557"/><use href="#S49" x="563"/><use href="#S48" x="569"/><use href="#S48" x="575"/><use href="#S95" x="581"/><use href="#S67" x="587"/><use href="#S55" x="593"/><use href="#S73" x="599"/><use href="#S90" x="605"/><use href="#S54" x="611"/><use href="#S52" x="617"/></g>
<rect x="249" y="515" width="229" height="3" fill="#00a000"/>
<rect x="248" y="512" width="1" height="9" fill="#fff"/>
<rect x="479" y="513" width="1" height="7" fill="#00a000"/>
<rect x="480" y="514" width="1" height="5" fill="#00a000"/>
<rect x="481" y="515" width="1" height="3" fill="#00a000"/>
<rect x="482" y="516" width="1" height="1" fill="#00a000"/>
<rect x="478" y="511" width="1" height="11" fill="#fff"/>
<rect x="479" y="512" width="1" height="1" fill="#fff"/>
<rect x="479" y="520" width="1" height="1" fill="#fff"/>
<rect x="480" y="513" width="1" height="1" fill="#fff"/>
<rect x="480" y="519" width="1" height="1" fill="#fff"/>
<rect x="481" y="514" width="1" height="1" fill="#fff"/>
<rect x="481" y="518" width="1" height="1" fill="#fff"/>
<rect x="482" y="515" width="1" height="1" fill="#fff"/>
<rect x="482" y="517" width="1" height="1" fill="#fff"/>
<rect x="483" y="516" width="1" height="1" fill="#fff"/>
<g fill="#fff" transform="translate(0,508)"><use href="#S85" x="527"/><use href="#S110" x="533"/><use href="#S105" x="539"/><use href="#S82" x="545"/><use href="#S101" x="551"/><use href="#S102" x="557"/><use href="#S49" x="563"/><use href="#S48" x="569"/><use href="#S48" x="575"/><use href="#S95" x="581"/><use href="#S65" x="587"/><use href="#S51" x="593"/><use href="#S65" x="599"/><use href="#S67" x="605"/><use href="#S75" x="611"/><use href="#S55" x="617"/></g>
<rect x="10" y="526" width="517" height="3" fill="#000032"/>
<rect x="249" y="526" width="224" height="3" fill="#00a000"/>
<rect x="248" y="523" width="1" height="9" fill="#fff"/>
<rect x="474" y="524" width="1" height="7" fill="#00a000"/>
<rect x="475" y="525" width="1" height="5" fill="#00a000"/>
<rect x="476" y="526" width="1" height="3" fill="#00a000"/>
<rect x="477" y="527" width="1" height="1" fill="#00a000"/>
<rect x="473" y="522" width="1" height="11" fill="#fff"/>
<rect x="474" y="523" width="1" height="1" fill="#fff"/>
<rect x="474" y="531" width="1" height="1" fill="#fff"/>
<rect x="475" y="524" width="1" height="1" fill="#fff"/>
<rect x="475" y="530" width="1" height="1" fill="#fff"/>
<rect x="476" y="525" width="1" height="1" fill="#fff"/>
<rect x="476" y="529" width="1" height="1" fill="#fff"/>
<rect x="477" y="526" width="1" height="1" fill="#fff"/>
<rect x="477" y="528" width="1" height="1" fill="#fff"/>
<rect x="478" y="527" width="1" height="1" fill="#fff"/>
<g fill="#fff" transform="translate(0,519)"><use href="#S85" x="527"/><use href="#S110" x="533"/><use href="#S105" x="539"/><use href="#S82" x="545"/><use href="#S101" x="551"/><use href="#S102" x="557"/><use href="#S49" x="563"/><use href="#S48" x="569"/><use href="#S48" x="575"/><use href="#S95" x="581"/><use href="#S85" x="587"/><use href="#S80" x="593"/><use href="#S73" x="599"/><use href="#S48" x="605"/><use href="#S48" x="611"/><use href="#S48" x="617"/><use href="#S46" x="623"/><use href="#S46" x="629"/></g>
<rect x="249" y="537" width="229" height="3" fill="#00a000"/>
<rect x="248" y="534" width="1" height="9" fill="#fff"/>
<rect x="479" y="535" width="1" height="7" fill="#00a000"/>
<rect x="480" y="536" width="1" height="5" fill="#00a000"/>
<rect x="481" y="537" width="1" height="3" fill="#00a000"/>
<rect x="482" y="538" width="1" height="1" fill="#00a000"/>
<rect x="478" y="533" width="1" height="11" fill="#fff"/>
<rect x="479" y="534" width="1" height="1" fill="#fff"/>
<rect x="479" y="542" width="1" height="1" fill="#fff"/>
<rect x="480" y="535" width="1" height="1" fill="#fff"/>
<rect x="480" y="541" width="1" height="1" fill="#fff"/>
<rect x="481" y="536" width="1" height="1" fill="#fff"/>
<rect x="481" y="540" width="1" height="1" fill="#fff"/>
<rect x="482" y="537" width="1" height="1" fill="#fff"/>
<rect x="482" y="539" width="1" height="1" fill="#fff"/>
<rect x="483" y="538" width="1" height="1" fill="#fff"/>
<g fill="#fff" transform="translate(0,530)"><use href="#S85" x="527"/><use href="#S110" x="533"/><use href="#S105" x="539"/><use href="#S82" x="545"/><use href="#S101" x="551"/><use href="#S102" x="557"/><use href="#S49" x="563"/><use href="#S48" x="569"/><use href="#S48" x="575"/><use href="#S95" x="581"/><use href="#S65" x="587"/><use href="#S55" x="593"/><use href="#S81" x="599"/><use href="#S90" x="605"/><use href="#S49" x="611"/><use href="#S48" x="617"/></g>
<rect x="10" y="548" width="517" height="3" fill="#000032"/>
<rect x="249" y="548" width="229" height="3" fill="#00a000"/>
<rect x="248" y="545" width="1" height="9" fill="#fff"/>
<rect x="479" y="546" width="1" height="7" fill="#00a000"/>
<rect x="480" y="547" width="1" height="5" fill="#00a000"/>
<rect x="481" y="548" width="1" height="3" fill="#00a000"/>
<rect x="482" y="549" width="1" height="1" fill="#00a000"/>
<rect x="478" y="544" width="1" height="11" fill="#fff"/>
<rect x="479" y="545" width="1" height="1" fill="#fff"/>
<rect x="479" y="553" width="1" height="1" fill="#fff"/>
<rect x="480" y="546" width="1" height="1" fill="#fff"/>
<rect x="480" y="552" width="1" height="1" fill="#fff"/>
<rect x="481" y="547" width="1" height="1" fill="#fff"/>
<rect x="481" y="551" width="1" height="1" fill="#fff"/>
<rect x="482" y="548" width="1" height="1" fill="#fff"/>
<rect x="482" y="550" width="1" height="1" fill="#fff"/>
<rect x="483" y="549" width="1" height="1" fill="#fff"/>
<g fill="#fff" transform="translate(0,541)"><use href="#S85" x="527"/><use href="#S110" x="533"/><use href="#S105" x="539"/><use href="#S82" x="545"/><use href="#S101" x="551"/><use href="#S102" x="557"/><use href="#S49" x="563"/><use href="#S48" x="569"/><use href="#S48" x="575"/><use href="#S95" x="581"/><use href="#S65" x="587"/><use href="#S50" x="593"/><use href="#S88" x="599"/><use href="#S65" x="605"/><use href="#S88" x="611"/><use href="#S49" x="617"/></g>
<rect x="240" y="559" width="238" height="3" fill="#00a000"/>
<rect x="239" y="556" width="1" height="9" fill="#fff"/>
<rect x="479" y="557" width="1" height="7" fill="#00a000"/>
<rect x="480" y="558" width="1" height="5" fill="#00a000"/>
<rect x="481" y="559" width="1" height="3" fill="#00a000"/>
<rect x="482" y="560" width="1" height="1" fill="#00a000"/>
<rect x="478" y="555" width="1" height="11" fill="#fff"/>
<rect x="479" y="556" width="1" height="1" fill="#fff"/>
<rect x="479" y="564" width="1" height="1" fill="#fff"/>
<rect x="480" y="557" width="1" height="1" fill="#fff"/>
<rect x="480" y="563" width="1" height="1" fill="#fff"/>
<rect x="481" y="558" width="1" height="1" fill="#fff"/>
<rect x="481" y="562" width="1" height="1" fill="#fff"/>
<rect x="482" y="559" width="1" height="1" fill="#fff"/>
<rect x="482" y="561" width="1" height="1" fill="#fff"/>
<rect x="483" y="560" width="1" height="1" fill="#fff"/>
<rect x="453" y="562" width="1" height="2" fill="#fffc70"/>
<rect x="452" y="564" width="3" height="2" fill="#fffc70"/>
<g fill="#fff" transform="translate(0,552)"><use href="#S85" x="527"/><use href="#S110" x="533"/><use href="#S105" x="539"/><use href="#S82" x="545"/><use href="#S101" x="551"/><use href="#S102" x="557"/><use href="#S49" x="563"/><use href="#S48" x="569"/><use href="#S48" x="575"/><use href="#S95" x="581"/><use href="#S81" x="587"/><use href="#S57" x="593"/><use href="#S90" x="599"/><use href="#S86" x="605"/><use href="#S81" x="611"/><use href="#S54" x="617"/></g>
<rect x="10" y="570" width="517" height="3" fill="#000032"/>
<rect x="254" y="570" width="224" height="3" fill="#00a000"/>
<rect x="253" y="567" width="1" height="9" fill="#fff"/>
<rect x="479" y="568" width="1" height="7" fill="#00a000"/>
<rect x="480" y="569" width="1" height="5" fill="#00a000"/>
<rect x="481" y="570" width="1" height="3" fill="#00a000"/>
<rect x="482" y="571" width="1" height="1" fill="#00a000"/>
<rect x="478" y="566" width="1" height="11" fill="#fff"/>
<rect x="479" y="567" width="1" height="1" fill="#fff"/>
<rect x="479" y="575" width="1" height="1" fill="#fff"/>
<rect x="480" y="568" width="1" height="1" fill="#fff"/>
<rect x="480" y="574" width="1" height="1" fill="#fff"/>
<rect x="481" y="569" width="1" height="1" fill="#fff"/>
<rect x="481" y="573" width="1" height="1" fill="#fff"/>
<rect x="482" y="570" width="1" height="1" fill="#fff"/>
<rect x="482" y="572" width="1" height="1" fill="#fff"/>
<rect x="483" y="571" width="1" height="1" fill="#fff"/>
<rect x="453" y="573" width="1" height="2" fill="#fffc70"/>
<rect x="452" y="575" width="3" height="2" fill="#fffc70"/>
<g fill="#fff" transform="translate(0,563)"><use href="#S85" x="527"/><use href="#S110" x="533"/><use href="#S105" x="539"/><use href="#S82" x="545"/><use href="#S101" x="551"/><use href="#S102" x="557"/><use href="#S49" x="563"/><use href="#S48" x="569"/><use href="#S48" x="575"/><use href="#S95" x="581"/><use href="#S81" x="587"/><use href="#S57" x="593"/><use href="#S90" x="599"/><use href="#S86" x="605"/><use href="#S81" x="611"/><use href="#S57" x="617"/></g>
<rect x="249" y="581" width="229" height="3" fill="#00a000"/>
<rect x="248" y="578" width="1" height="9" fill="#fff"/>
<rect x="479" y="579" width="1" height="7" fill="#00a000"/>
<rect x="480" y="580" width="1" height="5" fill="#00a000"/>
<rect x="481" y="581" width="1" height="3" fill="#00a000"/>
<rect x="482" y="582" width="1" height="1" fill="#00a000"/>
<rect x="478" y="577" width="1" height="11" fill="#fff"/>
<rect x="479" y="578" width="1" height="1" fill="#fff"/>
<rect x="479" y="586" width="1" height="1" fill="#fff"/>
<rect x="480" y="579" width="1" height="1" fill="#fff"/>
<rect x="480" y="585" width="1" height="1" fill="#fff"/>
<rect x="481" y="580" width="1" height="1" fill="#fff"/>
<rect x="481" y="584" width="1" height="1" fill="#fff"/>
<rect x="482" y="581" width="1" height="1" fill="#fff"/>
<rect x="482" y="583" width="1" height="1" fill="#fff"/>
<rect x="483" y="582" width="1" height="1" fill="#fff"/>
<rect x="453" y="584" width="1" height="2" fill="#fffc70"/>
<rect x="452" y="586" width="3" height="2" fill="#fffc70"/>
<g fill="#fff" transform="translate(0,574)"><use href="#S85" x="527"/><use href="#S110" x="533"/><use href="#S105" x="539"/><use href="#S82" x="545"/><use href="#S101" x="551"/><use href="#S102" x="557"/><use href="#S49" x="563"/><use href="#S48" x="569"/><use href="#S48" x="575"/><use href="#S95" x="581"/><use href="#S81" x="587"/><use href="#S57" x="593"/><use href="#S90" x="599"/><use href="#S86" x="605"/><use href="#S82" x="611"/><use href="#S48" x="617"/></g>
<rect x="10" y="592" width="517" height="3" fill="#000032"/>
<rect x="249" y="592" width="224" height="3" fill="#00a000"/>
<rect x="248" y="589" width="1" height="9" fill="#fff"/>
<rect x="474" y="590" width="1" height="7" fill="#00a000"/>
<rect x="475" y="591" width="1" height="5" fill="#00a000"/>
<rect x="476" y="592" width="1" height="3" fill="#00a000"/>
<rect x="477" y="593" width="1" height="1" fill="#00a000"/>
<rect x="473" y="588" width="1" height="11" fill="#fff"/>
<rect x="474" y="589" width="1" height="1" fill="#fff"/>
<rect x="474" y="597" width="1" height="1" fill="#fff"/>
<rect x="475" y="590" width="1" height="1" fill="#fff"/>
<rect x="475" y="596" width="1" height="1" fill="#fff"/>
<rect x="476" y="591" width="1" height="1" fill="#fff"/>
<rect x="476" y="595" width="1" height="1" fill="#fff"/>
<rect x="477" y="592" width="1" height="1" fill="#fff"/>
<rect x="477" y="594" width="1" height="1" fill="#fff"/>
<rect x="478" y="593" width="1" height="1" fill="#fff"/>
<g fill="#fff" transform="translate(0,585)"><use href="#S85" x="527"/><use href="#S110" x="533"/><use href="#S105" x="539"/><use href="#S82" x="545"/><use href="#S101" x="551"/><use href="#S102" x="557"/><use href="#S49" x="563"/><use href="#S48" x="569"/><use href="#S48" x="575"/><use href="#S95" x="581"/><use href="#S65" x="587"/><use href="#S55" x="593"/><use href="#S81" x="599"/><use href="#S90" x="605"/><use href="#S48" x="611"/><use href="#S56" x="617"/></g>
<g fill="#fff" transform="translate(0,604)"><use href="#S76" x="10"/><use href="#S97" x="16"/><use href="#S114" x="22"/><use href="#S103" x="28"/><use href="#S101" x="34"/><use href="#S103" x="46"/><use href="#S97" x="52"/><use href="#S112" x="58"/><use href="#S115" x="64"/><use href="#S58" x="70"/></g>
<rect x="82" y="608" width="1" height="2" fill="#fffc70"/>
<rect x="81" y="610" width="3" height="3" fill="#fffc70"/>
<rect x="80" y="613" width="5" height="2" fill="#fffc70"/>
<g fill="#fff" transform="translate(0,604)"><use href="#S40" x="88"/><use href="#S105" x="94"/><use href="#S110" x="100"/><use href="#S81" x="112"/><use href="#S117" x="118"/><use href="#S101" x="124"/><use href="#S114" x="130"/><use href="#S121" x="136"/><use href="#S41" x="142"/><use href="#S47" x="148"/></g>
<rect x="155" y="611" width="6" height="1" fill="#00c4c8"/>
<g fill="#fff" transform="translate(0,604)"><use href="#S40" x="166"/><use href="#S105" x="172"/><use href="#S110" x="178"/><use href="#S83" x="190"/><use href="#S117" x="196"/><use href="#S98" x="202"/><use href="#S106" x="208"/><use href="#S101" x="214"/><use href="#S99" x="220"/><use href="#S116" x="226"/><use href="#S41" x="232"/></g>
<rect x="444" y="607" width="1" height="9" fill="#323000"/>
<rect x="462" y="607" width="1" height="9" fill="#323000"/>
<rect x="445" y="610" width="17" height="3" fill="#00c4c8"/>
<g fill="#fff" transform="translate(0,604)"><use href="#S61" x="466"/><use href="#S53" x="472"/><use href="#S48" x="478"/><use href="#S99" x="484"/><use href="#S104" x="490"/><use href="#S97" x="496"/><use href="#S114" x="502"/><use href="#S46" x="508"/></g>
</svg>
<div id="labels">
<span class="m" style="left:113px;top:0px">20%</span>
<span class="m" style="left:230px;top:0px">~40%</span>
<span class="m" style="left:354px;top:0px">~60%</span>
<span class="m" style="left:478px;top:0px">~80%</span>
<span class="m" style="left:595px;top:0px">~100%</span>
<span class="m" style="left:10px;top:25px">BP059406</span>
<span class="t" style="left:402px;top:30px">AlignView.pm Beta rel.7</span>
<span class="s" style="left:8px;top:42px">|1</span>
<span class="s" style="left:497px;top:42px">314|</span>
<span class="s" style="left:527px;top:57px">UniRef100_Q2HW47</span>
<span class="s" style="left:527px;top:68px">UniRef100_B7FIK6</span>
<span class="s" style="left:527px;top:79px">UniRef100_C6TNQ6</span>
<span class="s" style="left:527px;top:90px">UniRef100_C6TEE7</span>
<span class="s" style="left:527px;top:101px">UniRef100_B9RFE9</span>
<span class="s" style="left:527px;top:112px">UniRef100_B9I7B0</span>
<span class="s" style="left:527px;top:123px">UniRef100_B9NG18</span>
<span class="s" style="left:527px;top:134px">UniRef100_B9N4M3</span>
<span class="s" style="left:527px;top:145px">UniRef100_A7PRZ4</span>
<span class="s" style="left:527px;top:156px">UniRef100_A5BIA7</span>
<span class="s" style="left:527px;top:167px">UniRef100_A7PRZ3</span>
<span class="s" style="left:527px;top:178px">UniRef100_UPI000..</span>
<span class="s" style="left:527px;top:189px">UniRef100_O80494</span>
<span class="s" style="left:527px;top:200px">UniRef100_B9IL91</span>
<span class="s" style="left:527px;top:211px">UniRef100_A7PRZ2</span>
<span class="s" style="left:527px;top:222px">UniRef100_A5BIA6</span>
<span class="s" style="left:527px;top:233px">UniRef100_B9STG3</span>
<span class="s" style="left:527px;top:244px">UniRef100_Q9C7J9</span>
<span class="s" style="left:527px;top:255px">UniRef100_Q9C7K0</span>
<span class="s" style="left:527px;top:266px">UniRef100_B9GME9</span>
<span class="s" style="left:527px;top:277px">UniRef100_A9PEI4</span>
<span class="s" style="left:527px;top:288px">UniRef100_A7QZ06</span>
<span class="s" style="left:527px;top:299px">UniRef100_B9GME8</span>
<span class="s" style="left:527px;top:310px">UniRef100_UPI000..</span>
<span class="s" style="left:527px;top:321px">UniRef100_B9RJ45</span>
<span class="s" style="left:527px;top:332px">UniRef100_B7FHN8</span>
<span class="s" style="left:527px;top:343px">UniRef100_A7QZ12</span>
<span class="s" style="left:527px;top:354px">UniRef100_B9RFE8</span>
<span class="s" style="left:527px;top:365px">UniRef100_B9RFT4</span>
<span class="s" style="left:527px;top:376px">UniRef100_B9HB85</span>
<span class="s" style="left:527px;top:387px">UniRef100_C6TJF5</span>
<span class="s" style="left:527px;top:398px">UniRef100_B9RJ44</span>
<span class="s" style="left:527px;top:409px">UniRef100_B9IL88</span>
<span class="s" style="left:527px;top:420px">UniRef100_C6TM55</span>
<span class="s" style="left:527px;top:431px">UniRef100_Q9FLU7</span>
<span class="s" style="left:527px;top:442px">UniRef100_UPI000..</span>
<span class="s" style="left:527px;top:453px">UniRef100_A7QZ09</span>
<span class="s" style="left:527px;top:464px">UniRef100_A5ANP6</span>
<span class="s" style="left:527px;top:475px">UniRef100_B8AEV9</span>
<span class="s" style="left:527px;top:486px">UniRef100_Q6K3F3</span>
<span class="s" style="left:527px;top:497px">UniRef100_C7IZ64</span>
<span class="s" style="left:527px;top:508px">UniRef100_A3ACK7</span>
<span class="s" style="left:527px;top:519px">UniRef100_UPI000..</span>
<span class="s" style="left:527px;top:530px">UniRef100_A7QZ10</span>
<span class="s" style="left:527px;top:541px">UniRef100_A2XAX1</span>
<span class="s" style="left:527px;top:552px">UniRef100_Q9ZVQ6</span>
<span class="s" style="left:527px;top:563px">UniRef100_Q9ZVQ9</span>
<span class="s" style="left:527px;top:574px">UniRef100_Q9ZVR0</span>
<span class="s" style="left:527px;top:585px">UniRef100_A7QZ08</span>
<span class="s" style="left:10px;top:604px">Large gaps:</span>
<span class="s" style="left:88px;top:604px">(in Query)/</span>
<span class="s" style="left:166px;top:604px">(in Subject)</span>
<span class="s" style="left:466px;top:604px">=50char.</span>
</div>
</body></html>
